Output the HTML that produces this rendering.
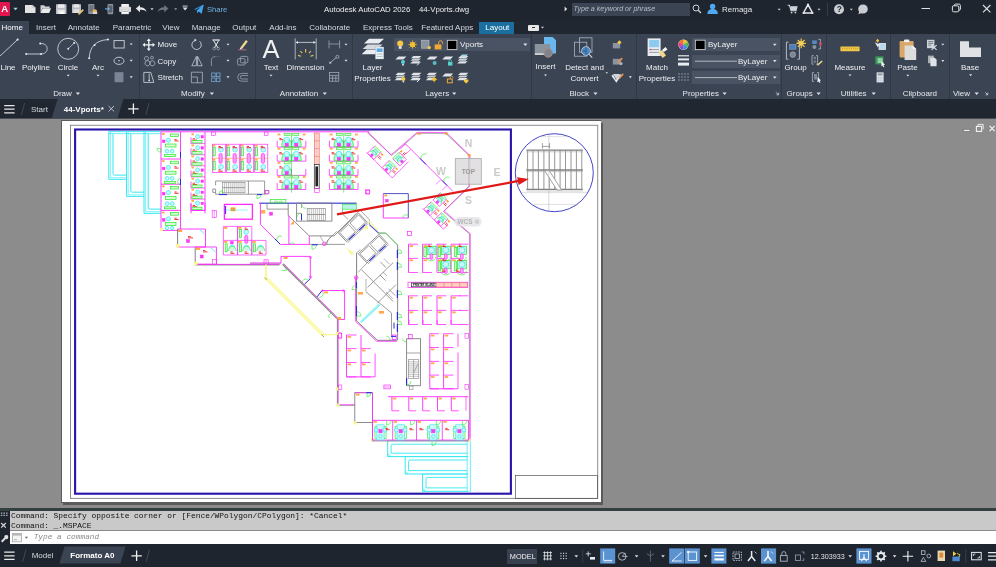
<!DOCTYPE html>
<html><head><meta charset="utf-8"><title>Autodesk AutoCAD 2026 - 44-Vports.dwg</title>
<style>
html,body{margin:0;padding:0;background:#8c8c8c;}
#app{position:relative;width:996px;height:567px;overflow:hidden;background:#8c8c8c;font-family:"Liberation Sans",sans-serif;}
#app div,#app span{position:absolute;white-space:nowrap;}
#app svg{position:absolute;left:0;top:0;will-change:transform;}
.mono{font-family:"Liberation Mono",monospace;}
</style></head><body>
<div id="app">
<div style="left:0px;top:0px;width:996px;height:21px;background:#1f252f;"></div>
<div style="left:0px;top:21px;width:996px;height:13px;background:#212731;"></div>
<div style="left:0px;top:34px;width:996px;height:65px;background:#3b4453;"></div>
<div style="left:0px;top:99px;width:996px;height:19.5px;background:#212731;"></div>
<div style="left:0px;top:117.6px;width:996px;height:1.2px;background:#4a4f57;"></div>
<div style="left:0px;top:118.8px;width:996px;height:389px;background:#8c8c8c;"></div>
<div style="left:63px;top:123px;width:540px;height:381.5px;background:#5a5a5a;"></div>
<div style="left:60.9px;top:120px;width:540.6px;height:382.6px;background:#5c5c5c;"></div>
<div style="left:62px;top:121px;width:539.3px;height:381.4px;background:#ffffff;"></div>
<div style="left:0px;top:508px;width:996px;height:37px;background:#1f252f;"></div>
<div style="left:0px;top:507.6px;width:996px;height:3.4px;background:#34403f;"></div>
<div style="left:9.5px;top:511px;width:996px;height:19.4px;background:#c9c9c9;"></div>
<div style="left:9.5px;top:530.3px;width:996px;height:0.9px;background:#8a8a8a;"></div>
<div style="left:9.5px;top:531.2px;width:996px;height:12.7px;background:#ffffff;"></div>
<div style="left:0px;top:543.9px;width:996px;height:23.1px;background:#1f252f;"></div>
<div style="left:0px;top:2px;width:10px;height:13.5px;background:#e0164f;border-radius:0 1px 1px 0;"></div>
<div style="left:572px;top:2.5px;width:117.5px;height:13.5px;background:#3b4453;"></div>
<div style="left:0px;top:21px;width:29px;height:13px;background:#3b4453;"></div>
<div style="left:478.7px;top:21.5px;width:35px;height:12.5px;background:#1a6fa0;"></div>
<div style="left:528px;top:24.5px;width:10.5px;height:6px;background:#e8e8e8;border-radius:1px;"></div>
<div style="left:531.5px;top:27px;width:3.5px;height:1px;background:#333;"></div>
<div style="left:138.5px;top:34px;width:1px;height:65px;background:#303846;"></div>
<div style="left:254.5px;top:34px;width:1px;height:65px;background:#303846;"></div>
<div style="left:352.0px;top:34px;width:1px;height:65px;background:#303846;"></div>
<div style="left:530.5px;top:34px;width:1px;height:65px;background:#303846;"></div>
<div style="left:636.0px;top:34px;width:1px;height:65px;background:#303846;"></div>
<div style="left:780.5px;top:34px;width:1px;height:65px;background:#303846;"></div>
<div style="left:825.9px;top:34px;width:1px;height:65px;background:#303846;"></div>
<div style="left:889.9px;top:34px;width:1px;height:65px;background:#303846;"></div>
<div style="left:949.0px;top:34px;width:1px;height:65px;background:#303846;"></div>
<div style="left:393.5px;top:38.2px;width:136px;height:13px;background:#4a5363;"></div>
<div style="left:692px;top:38.2px;width:88px;height:13px;background:#4a5363;"></div>
<div style="left:692px;top:54.5px;width:88px;height:13px;background:#4a5363;"></div>
<div style="left:692px;top:70.8px;width:88px;height:13px;background:#4a5363;"></div>
<div style="left:507.3px;top:548.5px;width:30px;height:15.5px;background:#38414f;"></div>
<svg width="996" height="567" viewBox="0 0 996 567">
<g id="drawing">
<rect x="70.5" y="125.3" width="527.2" height="373.1" stroke="#8c8c8c" stroke-width="1.0" fill="none" />
<rect x="515.4" y="475.4" width="82.2" height="23.0" stroke="#555" stroke-width="0.7" fill="none" />
<rect x="75.1" y="129.5" width="435.8" height="364.2" stroke="#2814aa" stroke-width="2.1" fill="none" />
<path d="M108.8 131.6 L108.8 179.3 L126.6 179.3" stroke="#30e8f0" stroke-width="1.0" fill="none" />
<path d="M110.4 131.6 L110.4 177.7 L126.6 177.7" stroke="#30e8f0" stroke-width="0.6" fill="none" />
<path d="M113.0 133.6V173.6q0 1.5 1.5 1.5H126.6" stroke="#30e8f0" stroke-width="1.0" fill="none"/>
<path d="M108.8 131.6L126.6 131.6" stroke="#30e8f0" stroke-width="0.9" fill="none" />
<path d="M108.8 133.6L126.6 133.6" stroke="#30e8f0" stroke-width="0.7" fill="none" />
<path d="M126.6 131.6 L126.6 196.4 L144.0 196.4" stroke="#30e8f0" stroke-width="1.0" fill="none" />
<path d="M128.2 131.6 L128.2 194.8 L144.0 194.8" stroke="#30e8f0" stroke-width="0.6" fill="none" />
<path d="M130.8 133.6V190.7q0 1.5 1.5 1.5H144.0" stroke="#30e8f0" stroke-width="1.0" fill="none"/>
<path d="M126.6 131.6L144.0 131.6" stroke="#30e8f0" stroke-width="0.9" fill="none" />
<path d="M126.6 133.6L144.0 133.6" stroke="#30e8f0" stroke-width="0.7" fill="none" />
<path d="M144.0 131.6 L144.0 213.3 L161.0 213.3" stroke="#30e8f0" stroke-width="1.0" fill="none" />
<path d="M145.6 131.6 L145.6 211.7 L161.0 211.7" stroke="#30e8f0" stroke-width="0.6" fill="none" />
<path d="M148.2 133.6V207.6q0 1.5 1.5 1.5H161.0" stroke="#30e8f0" stroke-width="1.0" fill="none"/>
<path d="M144.0 131.6L161.0 131.6" stroke="#30e8f0" stroke-width="0.9" fill="none" />
<path d="M144.0 133.6L161.0 133.6" stroke="#30e8f0" stroke-width="0.7" fill="none" />
<path d="M468.4 440.6 L470.4 440.6 L470.4 491.3 L468.4 491.3" stroke="#30e8f0" stroke-width="0.7" fill="none" />
<path d="M467.2 440.6L467.2 491.3" stroke="#30e8f0" stroke-width="0.7" fill="none" />
<path d="M468.0 440.8 L387.7 440.8" stroke="#30e8f0" stroke-width="0.6" fill="none" />
<path d="M387.7 440.8 L387.7 456.6 L468.0 456.6" stroke="#30e8f0" stroke-width="1.0" fill="none" />
<path d="M467.0 444.2H392.6q-1.5 0 -1.5 1.5V453.2H467.0" stroke="#30e8f0" stroke-width="0.9" fill="none"/>
<circle cx="388.9" cy="455.6" r="1.1" stroke="#30e8f0" stroke-width="0.6" fill="none"/>
<path d="M468.0 456.6 L405.2 456.6" stroke="#30e8f0" stroke-width="0.6" fill="none" />
<path d="M405.2 456.6 L405.2 474.0 L468.0 474.0" stroke="#30e8f0" stroke-width="1.0" fill="none" />
<path d="M467.0 460.0H410.1q-1.5 0 -1.5 1.5V470.6H467.0" stroke="#30e8f0" stroke-width="0.9" fill="none"/>
<circle cx="406.4" cy="473.0" r="1.1" stroke="#30e8f0" stroke-width="0.6" fill="none"/>
<path d="M468.0 474.0 L422.6 474.0" stroke="#30e8f0" stroke-width="0.6" fill="none" />
<path d="M422.6 474.0 L422.6 491.3 L468.0 491.3" stroke="#30e8f0" stroke-width="1.0" fill="none" />
<path d="M467.0 477.4H427.5q-1.5 0 -1.5 1.5V487.9H467.0" stroke="#30e8f0" stroke-width="0.9" fill="none"/>
<circle cx="423.8" cy="490.3" r="1.1" stroke="#30e8f0" stroke-width="0.6" fill="none"/>
<path d="M161.0 131.8L161.0 230.0" stroke="#ff28ff" stroke-width="0.9" fill="none" />
<path d="M180.5 131.8L180.5 229.0" stroke="#ff28ff" stroke-width="0.9" fill="none" />
<path d="M161.0 159.0L180.5 159.0" stroke="#ff28ff" stroke-width="0.9" fill="none" />
<rect x="162.0" y="133.0" width="2.6" height="1.8" fill="#ff9a28" opacity="0.85"/>
<rect x="162.4" y="140.0" width="2.6" height="2.6" fill="#f040f0" stroke="#ff28ff" stroke-width="0.5"/>
<circle cx="168.4" cy="140.2" r="2.1" stroke="#30e8f0" stroke-width="0.7" fill="#c8f8f8"/>
<rect x="165.6" y="144.0" width="10.4" height="3.0" stroke="#28e828" stroke-width="0.7" fill="#d8fcd8" />
<rect x="170.5" y="134.0" width="8.0" height="2.6" stroke="#28e828" stroke-width="0.7" fill="#d8fcd8" />
<circle cx="167.0" cy="151.2" r="1.9" stroke="#30e8f0" stroke-width="0.7" fill="#c8f8f8"/>
<circle cx="172.2" cy="151.2" r="1.9" stroke="#30e8f0" stroke-width="0.7" fill="#c8f8f8"/>
<path d="M174.4 139.6h2.3M174.4 140.9h4.2" stroke="#f02020" stroke-width="0.9" fill="none"/>
<rect x="164.6" y="154.4" width="11.0" height="2.0" stroke="#28e828" stroke-width="0.7" fill="#d8fcd8" />
<path d="M161.0 184.2L180.5 184.2" stroke="#ff28ff" stroke-width="0.9" fill="none" />
<rect x="162.0" y="160.2" width="2.6" height="1.8" fill="#ff9a28" opacity="0.85"/>
<rect x="162.4" y="167.2" width="2.6" height="2.6" fill="#f040f0" stroke="#ff28ff" stroke-width="0.5"/>
<circle cx="168.4" cy="167.4" r="2.1" stroke="#30e8f0" stroke-width="0.7" fill="#c8f8f8"/>
<rect x="165.6" y="171.2" width="10.4" height="3.0" stroke="#28e828" stroke-width="0.7" fill="#d8fcd8" />
<rect x="170.5" y="161.2" width="8.0" height="2.6" stroke="#28e828" stroke-width="0.7" fill="#d8fcd8" />
<circle cx="167.0" cy="178.4" r="1.9" stroke="#30e8f0" stroke-width="0.7" fill="#c8f8f8"/>
<circle cx="172.2" cy="178.4" r="1.9" stroke="#30e8f0" stroke-width="0.7" fill="#c8f8f8"/>
<path d="M174.4 166.8h2.3M174.4 168.1h4.2" stroke="#f02020" stroke-width="0.9" fill="none"/>
<rect x="164.6" y="181.6" width="11.0" height="2.0" stroke="#28e828" stroke-width="0.7" fill="#d8fcd8" />
<path d="M161.0 210.4L180.5 210.4" stroke="#ff28ff" stroke-width="0.9" fill="none" />
<rect x="162.0" y="185.4" width="2.6" height="1.8" fill="#ff9a28" opacity="0.85"/>
<rect x="162.4" y="192.4" width="2.6" height="2.6" fill="#f040f0" stroke="#ff28ff" stroke-width="0.5"/>
<circle cx="168.4" cy="192.6" r="2.1" stroke="#30e8f0" stroke-width="0.7" fill="#c8f8f8"/>
<rect x="165.6" y="196.4" width="10.4" height="3.0" stroke="#28e828" stroke-width="0.7" fill="#d8fcd8" />
<rect x="170.5" y="186.4" width="8.0" height="2.6" stroke="#28e828" stroke-width="0.7" fill="#d8fcd8" />
<circle cx="167.0" cy="203.6" r="1.9" stroke="#30e8f0" stroke-width="0.7" fill="#c8f8f8"/>
<circle cx="172.2" cy="203.6" r="1.9" stroke="#30e8f0" stroke-width="0.7" fill="#c8f8f8"/>
<path d="M174.4 192.0h2.3M174.4 193.3h4.2" stroke="#f02020" stroke-width="0.9" fill="none"/>
<rect x="164.6" y="206.8" width="11.0" height="2.0" stroke="#28e828" stroke-width="0.7" fill="#d8fcd8" />
<path d="M161.0 230.4L180.5 230.4" stroke="#ff28ff" stroke-width="0.9" fill="none" />
<rect x="162.0" y="211.6" width="2.6" height="1.8" fill="#ff9a28" opacity="0.85"/>
<rect x="162.4" y="218.6" width="2.6" height="2.6" fill="#f040f0" stroke="#ff28ff" stroke-width="0.5"/>
<circle cx="168.4" cy="218.8" r="2.1" stroke="#30e8f0" stroke-width="0.7" fill="#c8f8f8"/>
<rect x="165.6" y="222.6" width="10.4" height="3.0" stroke="#28e828" stroke-width="0.7" fill="#d8fcd8" />
<rect x="170.5" y="212.6" width="8.0" height="2.6" stroke="#28e828" stroke-width="0.7" fill="#d8fcd8" />
<circle cx="167.0" cy="228.0" r="1.7" stroke="#30e8f0" stroke-width="0.7" fill="#c8f8f8"/>
<circle cx="172.2" cy="228.0" r="1.7" stroke="#30e8f0" stroke-width="0.7" fill="#c8f8f8"/>
<path d="M174.4 218.2h2.3M174.4 219.5h4.2" stroke="#f02020" stroke-width="0.9" fill="none"/>
<path d="M157 148.6a3.4 3.4 0 0 0 4 3.4v-3.4z" stroke="#28e828" stroke-width="0.6" fill="none"/>
<path d="M180.5 178a3.6 3.6 0 0 0 0 7" stroke="#28e828" stroke-width="0.6" fill="none"/>
<path d="M180.5 152.0L180.5 158.0" stroke="#2828e0" stroke-width="1" fill="none" />
<path d="M180.5 179.0L180.5 185.0" stroke="#2828e0" stroke-width="1" fill="none" />
<path d="M205.0 131.8L205.0 210.5" stroke="#ff28ff" stroke-width="0.9" fill="none" />
<path d="M191.0 137.2L191.0 143.6" stroke="#ff28ff" stroke-width="0.8" fill="none" />
<path d="M191.0 143.6L205.0 143.6" stroke="#ff28ff" stroke-width="0.7" fill="none" />
<rect x="191.4" y="133.4" width="2.6" height="1.8" fill="#ff9a28" opacity="0.85"/>
<circle cx="197.6" cy="136.6" r="2.0" stroke="#30e8f0" stroke-width="0.7" fill="#c8f8f8"/>
<rect x="201.0" y="135.6" width="2.4" height="2.4" fill="#f040f0" stroke="#ff28ff" stroke-width="0.5"/>
<path d="M192.6 138.8h2.5M192.6 140.1h4.6" stroke="#f02020" stroke-width="0.9" fill="none"/>
<rect x="192.0" y="140.6" width="10.0" height="2.4" stroke="#28e828" stroke-width="0.7" fill="#d8fcd8" />
<path d="M191.0 148.3L191.0 154.7" stroke="#ff28ff" stroke-width="0.8" fill="none" />
<path d="M191.0 154.7L205.0 154.7" stroke="#ff28ff" stroke-width="0.7" fill="none" />
<rect x="191.4" y="144.5" width="2.6" height="1.8" fill="#ff9a28" opacity="0.85"/>
<circle cx="197.6" cy="147.7" r="2.0" stroke="#30e8f0" stroke-width="0.7" fill="#c8f8f8"/>
<rect x="201.0" y="146.7" width="2.4" height="2.4" fill="#f040f0" stroke="#ff28ff" stroke-width="0.5"/>
<path d="M192.6 149.9h2.5M192.6 151.2h4.6" stroke="#f02020" stroke-width="0.9" fill="none"/>
<rect x="192.0" y="151.7" width="10.0" height="2.4" stroke="#28e828" stroke-width="0.7" fill="#d8fcd8" />
<path d="M191.0 159.4L191.0 165.8" stroke="#ff28ff" stroke-width="0.8" fill="none" />
<path d="M191.0 165.8L205.0 165.8" stroke="#ff28ff" stroke-width="0.7" fill="none" />
<rect x="191.4" y="155.6" width="2.6" height="1.8" fill="#ff9a28" opacity="0.85"/>
<circle cx="197.6" cy="158.8" r="2.0" stroke="#30e8f0" stroke-width="0.7" fill="#c8f8f8"/>
<rect x="201.0" y="157.8" width="2.4" height="2.4" fill="#f040f0" stroke="#ff28ff" stroke-width="0.5"/>
<path d="M192.6 161.0h2.5M192.6 162.3h4.6" stroke="#f02020" stroke-width="0.9" fill="none"/>
<rect x="192.0" y="162.8" width="10.0" height="2.4" stroke="#28e828" stroke-width="0.7" fill="#d8fcd8" />
<path d="M191.0 170.5L191.0 176.9" stroke="#ff28ff" stroke-width="0.8" fill="none" />
<path d="M191.0 176.9L205.0 176.9" stroke="#ff28ff" stroke-width="0.7" fill="none" />
<rect x="191.4" y="166.7" width="2.6" height="1.8" fill="#ff9a28" opacity="0.85"/>
<circle cx="197.6" cy="169.9" r="2.0" stroke="#30e8f0" stroke-width="0.7" fill="#c8f8f8"/>
<rect x="201.0" y="168.9" width="2.4" height="2.4" fill="#f040f0" stroke="#ff28ff" stroke-width="0.5"/>
<path d="M192.6 172.1h2.5M192.6 173.4h4.6" stroke="#f02020" stroke-width="0.9" fill="none"/>
<rect x="192.0" y="173.9" width="10.0" height="2.4" stroke="#28e828" stroke-width="0.7" fill="#d8fcd8" />
<path d="M191.0 181.6L191.0 188.0" stroke="#ff28ff" stroke-width="0.8" fill="none" />
<path d="M191.0 188.0L205.0 188.0" stroke="#ff28ff" stroke-width="0.7" fill="none" />
<rect x="191.4" y="177.8" width="2.6" height="1.8" fill="#ff9a28" opacity="0.85"/>
<circle cx="197.6" cy="181.0" r="2.0" stroke="#30e8f0" stroke-width="0.7" fill="#c8f8f8"/>
<rect x="201.0" y="180.0" width="2.4" height="2.4" fill="#f040f0" stroke="#ff28ff" stroke-width="0.5"/>
<path d="M192.6 183.2h2.5M192.6 184.5h4.6" stroke="#f02020" stroke-width="0.9" fill="none"/>
<rect x="192.0" y="185.0" width="10.0" height="2.4" stroke="#28e828" stroke-width="0.7" fill="#d8fcd8" />
<path d="M191.0 192.7L191.0 199.1" stroke="#ff28ff" stroke-width="0.8" fill="none" />
<path d="M191.0 199.1L205.0 199.1" stroke="#ff28ff" stroke-width="0.7" fill="none" />
<rect x="191.4" y="188.9" width="2.6" height="1.8" fill="#ff9a28" opacity="0.85"/>
<circle cx="197.6" cy="192.1" r="2.0" stroke="#30e8f0" stroke-width="0.7" fill="#c8f8f8"/>
<rect x="201.0" y="191.1" width="2.4" height="2.4" fill="#f040f0" stroke="#ff28ff" stroke-width="0.5"/>
<path d="M192.6 194.3h2.5M192.6 195.6h4.6" stroke="#f02020" stroke-width="0.9" fill="none"/>
<rect x="192.0" y="196.1" width="10.0" height="2.4" stroke="#28e828" stroke-width="0.7" fill="#d8fcd8" />
<path d="M191.0 203.8L191.0 210.2" stroke="#ff28ff" stroke-width="0.8" fill="none" />
<path d="M191.0 210.2L205.0 210.2" stroke="#ff28ff" stroke-width="0.7" fill="none" />
<rect x="191.4" y="200.0" width="2.6" height="1.8" fill="#ff9a28" opacity="0.85"/>
<circle cx="197.6" cy="203.2" r="2.0" stroke="#30e8f0" stroke-width="0.7" fill="#c8f8f8"/>
<rect x="201.0" y="202.2" width="2.4" height="2.4" fill="#f040f0" stroke="#ff28ff" stroke-width="0.5"/>
<path d="M192.6 205.4h2.5M192.6 206.7h4.6" stroke="#f02020" stroke-width="0.9" fill="none"/>
<rect x="192.0" y="207.2" width="10.0" height="2.4" stroke="#28e828" stroke-width="0.7" fill="#d8fcd8" />
<path d="M191.0 210.5L205.0 210.5" stroke="#ff28ff" stroke-width="0.9" fill="none" />
<path d="M191.0 203.0L191.0 213.4" stroke="#ff28ff" stroke-width="0.9" fill="none" />
<path d="M205.0 203.0L205.0 213.4" stroke="#ff28ff" stroke-width="0.9" fill="none" />
<path d="M161.0 131.8L369.5 131.8" stroke="#ff28ff" stroke-width="0.9" fill="none" />
<rect x="211.6" y="132.0" width="4.0" height="3.6" stroke="#ff28ff" stroke-width="0.6" fill="none" />
<rect x="264.4" y="132.0" width="3.6" height="3.6" stroke="#ff28ff" stroke-width="0.6" fill="none" />
<rect x="212.2" y="210.5" width="4.2" height="7.0" stroke="#ff28ff" stroke-width="0.6" fill="none" />
<path d="M214.3 210.5L214.3 217.5" stroke="#ff28ff" stroke-width="0.5" fill="none" />
<rect x="212.4" y="144.2" width="13.1" height="28.3" stroke="#ff28ff" stroke-width="0.7" fill="none" />
<path d="M212.4 158.3L225.5 158.3" stroke="#ff9a28" stroke-width="0.6" fill="none" />
<rect x="212.8" y="144.6" width="2.6" height="1.8" fill="#ff9a28" opacity="0.85"/>
<rect x="212.8" y="158.8" width="2.6" height="1.8" fill="#ff9a28" opacity="0.85"/>
<rect x="213.2" y="147.2" width="2.0" height="8.6" stroke="#28e828" stroke-width="0.7" fill="#d8fcd8" />
<rect x="213.2" y="161.3" width="2.0" height="8.6" stroke="#28e828" stroke-width="0.7" fill="#d8fcd8" />
<circle cx="221.0" cy="149.6" r="2.4" stroke="#30e8f0" stroke-width="0.7" fill="#c8f8f8"/>
<circle cx="221.0" cy="166.9" r="2.4" stroke="#30e8f0" stroke-width="0.7" fill="#c8f8f8"/>
<rect x="219.0" y="153.6" width="3.2" height="9.6" rx="1.4" fill="#f8a0f8" stroke="#ff28ff" stroke-width="0.7"/>
<path d="M218.4 146.4h2.4M218.4 147.7h4.4" stroke="#f02020" stroke-width="0.9" fill="none"/>
<path d="M218.4 169.9h2.4M218.4 171.2h4.4" stroke="#f02020" stroke-width="0.9" fill="none"/>
<rect x="226.5" y="144.2" width="13.1" height="28.3" stroke="#ff28ff" stroke-width="0.7" fill="none" />
<path d="M226.5 158.3L239.6 158.3" stroke="#ff9a28" stroke-width="0.6" fill="none" />
<rect x="226.9" y="144.6" width="2.6" height="1.8" fill="#ff9a28" opacity="0.85"/>
<rect x="226.9" y="158.8" width="2.6" height="1.8" fill="#ff9a28" opacity="0.85"/>
<rect x="227.3" y="147.2" width="2.0" height="8.6" stroke="#28e828" stroke-width="0.7" fill="#d8fcd8" />
<rect x="227.3" y="161.3" width="2.0" height="8.6" stroke="#28e828" stroke-width="0.7" fill="#d8fcd8" />
<circle cx="235.1" cy="149.6" r="2.4" stroke="#30e8f0" stroke-width="0.7" fill="#c8f8f8"/>
<circle cx="235.1" cy="166.9" r="2.4" stroke="#30e8f0" stroke-width="0.7" fill="#c8f8f8"/>
<rect x="233.1" y="153.6" width="3.2" height="9.6" rx="1.4" fill="#f8a0f8" stroke="#ff28ff" stroke-width="0.7"/>
<path d="M232.5 146.4h2.4M232.5 147.7h4.4" stroke="#f02020" stroke-width="0.9" fill="none"/>
<path d="M232.5 169.9h2.4M232.5 171.2h4.4" stroke="#f02020" stroke-width="0.9" fill="none"/>
<rect x="240.6" y="144.2" width="13.1" height="28.3" stroke="#ff28ff" stroke-width="0.7" fill="none" />
<path d="M240.6 158.3L253.7 158.3" stroke="#ff9a28" stroke-width="0.6" fill="none" />
<rect x="241.0" y="144.6" width="2.6" height="1.8" fill="#ff9a28" opacity="0.85"/>
<rect x="241.0" y="158.8" width="2.6" height="1.8" fill="#ff9a28" opacity="0.85"/>
<rect x="241.4" y="147.2" width="2.0" height="8.6" stroke="#28e828" stroke-width="0.7" fill="#d8fcd8" />
<rect x="241.4" y="161.3" width="2.0" height="8.6" stroke="#28e828" stroke-width="0.7" fill="#d8fcd8" />
<circle cx="249.2" cy="149.6" r="2.4" stroke="#30e8f0" stroke-width="0.7" fill="#c8f8f8"/>
<circle cx="249.2" cy="166.9" r="2.4" stroke="#30e8f0" stroke-width="0.7" fill="#c8f8f8"/>
<rect x="247.2" y="153.6" width="3.2" height="9.6" rx="1.4" fill="#f8a0f8" stroke="#ff28ff" stroke-width="0.7"/>
<path d="M246.6 146.4h2.4M246.6 147.7h4.4" stroke="#f02020" stroke-width="0.9" fill="none"/>
<path d="M246.6 169.9h2.4M246.6 171.2h4.4" stroke="#f02020" stroke-width="0.9" fill="none"/>
<rect x="254.7" y="144.2" width="13.1" height="28.3" stroke="#ff28ff" stroke-width="0.7" fill="none" />
<path d="M254.7 158.3L267.8 158.3" stroke="#ff9a28" stroke-width="0.6" fill="none" />
<rect x="255.1" y="144.6" width="2.6" height="1.8" fill="#ff9a28" opacity="0.85"/>
<rect x="255.1" y="158.8" width="2.6" height="1.8" fill="#ff9a28" opacity="0.85"/>
<rect x="255.5" y="147.2" width="2.0" height="8.6" stroke="#28e828" stroke-width="0.7" fill="#d8fcd8" />
<rect x="255.5" y="161.3" width="2.0" height="8.6" stroke="#28e828" stroke-width="0.7" fill="#d8fcd8" />
<circle cx="263.3" cy="149.6" r="2.4" stroke="#30e8f0" stroke-width="0.7" fill="#c8f8f8"/>
<circle cx="263.3" cy="166.9" r="2.4" stroke="#30e8f0" stroke-width="0.7" fill="#c8f8f8"/>
<rect x="261.3" y="153.6" width="3.2" height="9.6" rx="1.4" fill="#f8a0f8" stroke="#ff28ff" stroke-width="0.7"/>
<path d="M260.7 146.4h2.4M260.7 147.7h4.4" stroke="#f02020" stroke-width="0.9" fill="none"/>
<path d="M260.7 169.9h2.4M260.7 171.2h4.4" stroke="#f02020" stroke-width="0.9" fill="none"/>
<path d="M215.6 181.0 L264.6 181.0 L264.6 194.2 L215.6 194.2 L215.6 189.0 L212.8 189.0 L212.8 192.4 L215.6 192.4" stroke="#808080" stroke-width="0.8" fill="none" />
<path d="M215.6 181.0 L215.6 185.4" stroke="#808080" stroke-width="0.8" fill="none" />
<path d="M248.4 181.0L248.4 194.2" stroke="#808080" stroke-width="0.8" fill="none" />
<path d="M224.6 182.4L224.6 192.8" stroke="#808080" stroke-width="0.5" fill="none" />
<path d="M226.7 182.4L226.7 192.8" stroke="#808080" stroke-width="0.5" fill="none" />
<path d="M228.7 182.4L228.7 192.8" stroke="#808080" stroke-width="0.5" fill="none" />
<path d="M230.8 182.4L230.8 192.8" stroke="#808080" stroke-width="0.5" fill="none" />
<path d="M232.8 182.4L232.8 192.8" stroke="#808080" stroke-width="0.5" fill="none" />
<path d="M234.8 182.4L234.8 192.8" stroke="#808080" stroke-width="0.5" fill="none" />
<path d="M236.9 182.4L236.9 192.8" stroke="#808080" stroke-width="0.5" fill="none" />
<path d="M238.9 182.4L238.9 192.8" stroke="#808080" stroke-width="0.5" fill="none" />
<path d="M241.0 182.4L241.0 192.8" stroke="#808080" stroke-width="0.5" fill="none" />
<path d="M243.0 182.4L243.0 192.8" stroke="#808080" stroke-width="0.5" fill="none" />
<path d="M222.6 187.6L245.0 187.6" stroke="#808080" stroke-width="0.7" fill="none" />
<rect x="222.6" y="182.4" width="22.4" height="10.4" stroke="#808080" stroke-width="0.6" fill="none" />
<rect x="264.6" y="190.4" width="3.6" height="3.6" stroke="#808080" stroke-width="0.6" fill="none" />
<path d="M219 194.2a3.6 3.6 0 0 1 3.6-3.6v3.6" stroke="#28e828" stroke-width="0.6" fill="none"/>
<path d="M257 194.6v4a4 4 0 0 0 4-4" stroke="#28e828" stroke-width="0.6" fill="none"/>
<path d="M219.0 194.6L227.0 194.6" stroke="#2828e0" stroke-width="1" fill="none" />
<path d="M257.0 194.6L262.0 194.6" stroke="#2828e0" stroke-width="1" fill="none" />
<path d="M277.2 140.7 L277.2 147.1 L291.5 147.1 L291.5 140.7" stroke="#ff28ff" stroke-width="0.8" fill="none" />
<rect x="277.6" y="133.6" width="2.8" height="1.8" fill="#ff9a28" opacity="0.85"/>
<rect x="284.1" y="133.4" width="6.0" height="2.2" stroke="#28e828" stroke-width="0.6" fill="#e0fce0" />
<path d="M279.4 138.4h2.2M279.4 139.7h4.0" stroke="#f02020" stroke-width="0.9" fill="none"/>
<path d="M281.9 146.5v-2.4a4.8 5.6 0 0 1 9.6 0v2.4z" stroke="#28e828" stroke-width="0.7" fill="#b4f6e6"/>
<circle cx="286.7" cy="139.9" r="2.8" stroke="#30e8f0" stroke-width="0.7" fill="#c8f8f8"/>
<rect x="285.1" y="143.3" width="3.2" height="3.2" fill="#f040f0" stroke="#ff28ff" stroke-width="0.5"/>
<path d="M291.5 140.7 L291.5 147.1 L305.8 147.1 L305.8 140.7" stroke="#ff28ff" stroke-width="0.8" fill="none" />
<rect x="302.8" y="133.6" width="2.8" height="1.8" fill="#ff9a28" opacity="0.85"/>
<rect x="292.7" y="133.4" width="6.0" height="2.2" stroke="#28e828" stroke-width="0.6" fill="#e0fce0" />
<path d="M299.2 138.4h2.2M299.2 139.7h4.0" stroke="#f02020" stroke-width="0.9" fill="none"/>
<path d="M291.5 146.5v-2.4a4.8 5.6 0 0 1 9.6 0v2.4z" stroke="#28e828" stroke-width="0.7" fill="#b4f6e6"/>
<circle cx="296.3" cy="139.9" r="2.8" stroke="#30e8f0" stroke-width="0.7" fill="#c8f8f8"/>
<rect x="294.7" y="143.3" width="3.2" height="3.2" fill="#f040f0" stroke="#ff28ff" stroke-width="0.5"/>
<path d="M277.2 154.8 L277.2 161.2 L291.5 161.2 L291.5 154.8" stroke="#ff28ff" stroke-width="0.8" fill="none" />
<rect x="277.6" y="147.8" width="2.8" height="1.8" fill="#ff9a28" opacity="0.85"/>
<rect x="284.1" y="147.6" width="6.0" height="2.2" stroke="#28e828" stroke-width="0.6" fill="#e0fce0" />
<path d="M279.4 152.6h2.2M279.4 153.9h4.0" stroke="#f02020" stroke-width="0.9" fill="none"/>
<path d="M281.9 160.7v-2.4a4.8 5.6 0 0 1 9.6 0v2.4z" stroke="#28e828" stroke-width="0.7" fill="#b4f6e6"/>
<circle cx="286.7" cy="154.1" r="2.8" stroke="#30e8f0" stroke-width="0.7" fill="#c8f8f8"/>
<rect x="285.1" y="157.4" width="3.2" height="3.2" fill="#f040f0" stroke="#ff28ff" stroke-width="0.5"/>
<path d="M291.5 154.8 L291.5 161.2 L305.8 161.2 L305.8 154.8" stroke="#ff28ff" stroke-width="0.8" fill="none" />
<rect x="302.8" y="147.8" width="2.8" height="1.8" fill="#ff9a28" opacity="0.85"/>
<rect x="292.7" y="147.6" width="6.0" height="2.2" stroke="#28e828" stroke-width="0.6" fill="#e0fce0" />
<path d="M299.2 152.6h2.2M299.2 153.9h4.0" stroke="#f02020" stroke-width="0.9" fill="none"/>
<path d="M291.5 160.7v-2.4a4.8 5.6 0 0 1 9.6 0v2.4z" stroke="#28e828" stroke-width="0.7" fill="#b4f6e6"/>
<circle cx="296.3" cy="154.1" r="2.8" stroke="#30e8f0" stroke-width="0.7" fill="#c8f8f8"/>
<rect x="294.7" y="157.4" width="3.2" height="3.2" fill="#f040f0" stroke="#ff28ff" stroke-width="0.5"/>
<path d="M277.2 169.0 L277.2 175.4 L291.5 175.4 L291.5 169.0" stroke="#ff28ff" stroke-width="0.8" fill="none" />
<rect x="277.6" y="161.9" width="2.8" height="1.8" fill="#ff9a28" opacity="0.85"/>
<rect x="284.1" y="161.7" width="6.0" height="2.2" stroke="#28e828" stroke-width="0.6" fill="#e0fce0" />
<path d="M279.4 166.7h2.2M279.4 168.0h4.0" stroke="#f02020" stroke-width="0.9" fill="none"/>
<path d="M281.9 174.8v-2.4a4.8 5.6 0 0 1 9.6 0v2.4z" stroke="#28e828" stroke-width="0.7" fill="#b4f6e6"/>
<circle cx="286.7" cy="168.2" r="2.8" stroke="#30e8f0" stroke-width="0.7" fill="#c8f8f8"/>
<rect x="285.1" y="171.6" width="3.2" height="3.2" fill="#f040f0" stroke="#ff28ff" stroke-width="0.5"/>
<path d="M291.5 169.0 L291.5 175.4 L305.8 175.4 L305.8 169.0" stroke="#ff28ff" stroke-width="0.8" fill="none" />
<path d="M277.2 183.1 L277.2 189.5 L291.5 189.5 L291.5 183.1" stroke="#ff28ff" stroke-width="0.8" fill="none" />
<rect x="277.6" y="176.0" width="2.8" height="1.8" fill="#ff9a28" opacity="0.85"/>
<rect x="284.1" y="175.8" width="6.0" height="2.2" stroke="#28e828" stroke-width="0.6" fill="#e0fce0" />
<path d="M279.4 180.8h2.2M279.4 182.2h4.0" stroke="#f02020" stroke-width="0.9" fill="none"/>
<path d="M281.9 188.9v-2.4a4.8 5.6 0 0 1 9.6 0v2.4z" stroke="#28e828" stroke-width="0.7" fill="#b4f6e6"/>
<circle cx="286.7" cy="182.3" r="2.8" stroke="#30e8f0" stroke-width="0.7" fill="#c8f8f8"/>
<rect x="285.1" y="185.7" width="3.2" height="3.2" fill="#f040f0" stroke="#ff28ff" stroke-width="0.5"/>
<path d="M291.5 183.1 L291.5 189.5 L305.8 189.5 L305.8 183.1" stroke="#ff28ff" stroke-width="0.8" fill="none" />
<rect x="302.8" y="176.0" width="2.8" height="1.8" fill="#ff9a28" opacity="0.85"/>
<rect x="292.7" y="175.8" width="6.0" height="2.2" stroke="#28e828" stroke-width="0.6" fill="#e0fce0" />
<path d="M299.2 180.8h2.2M299.2 182.2h4.0" stroke="#f02020" stroke-width="0.9" fill="none"/>
<path d="M291.5 188.9v-2.4a4.8 5.6 0 0 1 9.6 0v2.4z" stroke="#28e828" stroke-width="0.7" fill="#b4f6e6"/>
<circle cx="296.3" cy="182.3" r="2.8" stroke="#30e8f0" stroke-width="0.7" fill="#c8f8f8"/>
<rect x="294.7" y="185.7" width="3.2" height="3.2" fill="#f040f0" stroke="#ff28ff" stroke-width="0.5"/>
<path d="M291.5 133.0L291.5 192.6" stroke="#28e828" stroke-width="0.6" fill="none" />
<path d="M329.4 140.7 L329.4 147.1 L343.7 147.1 L343.7 140.7" stroke="#ff28ff" stroke-width="0.8" fill="none" />
<rect x="329.8" y="133.6" width="2.8" height="1.8" fill="#ff9a28" opacity="0.85"/>
<rect x="336.3" y="133.4" width="6.0" height="2.2" stroke="#28e828" stroke-width="0.6" fill="#e0fce0" />
<path d="M331.6 138.4h2.2M331.6 139.7h4.0" stroke="#f02020" stroke-width="0.9" fill="none"/>
<path d="M334.1 146.5v-2.4a4.8 5.6 0 0 1 9.6 0v2.4z" stroke="#28e828" stroke-width="0.7" fill="#b4f6e6"/>
<circle cx="338.9" cy="139.9" r="2.8" stroke="#30e8f0" stroke-width="0.7" fill="#c8f8f8"/>
<rect x="337.3" y="143.3" width="3.2" height="3.2" fill="#f040f0" stroke="#ff28ff" stroke-width="0.5"/>
<path d="M343.7 140.7 L343.7 147.1 L358.0 147.1 L358.0 140.7" stroke="#ff28ff" stroke-width="0.8" fill="none" />
<rect x="355.0" y="133.6" width="2.8" height="1.8" fill="#ff9a28" opacity="0.85"/>
<rect x="344.9" y="133.4" width="6.0" height="2.2" stroke="#28e828" stroke-width="0.6" fill="#e0fce0" />
<path d="M351.4 138.4h2.2M351.4 139.7h4.0" stroke="#f02020" stroke-width="0.9" fill="none"/>
<path d="M343.7 146.5v-2.4a4.8 5.6 0 0 1 9.6 0v2.4z" stroke="#28e828" stroke-width="0.7" fill="#b4f6e6"/>
<circle cx="348.5" cy="139.9" r="2.8" stroke="#30e8f0" stroke-width="0.7" fill="#c8f8f8"/>
<rect x="346.9" y="143.3" width="3.2" height="3.2" fill="#f040f0" stroke="#ff28ff" stroke-width="0.5"/>
<path d="M329.4 154.8 L329.4 161.2 L343.7 161.2 L343.7 154.8" stroke="#ff28ff" stroke-width="0.8" fill="none" />
<rect x="329.8" y="147.8" width="2.8" height="1.8" fill="#ff9a28" opacity="0.85"/>
<rect x="336.3" y="147.6" width="6.0" height="2.2" stroke="#28e828" stroke-width="0.6" fill="#e0fce0" />
<path d="M331.6 152.6h2.2M331.6 153.9h4.0" stroke="#f02020" stroke-width="0.9" fill="none"/>
<path d="M334.1 160.7v-2.4a4.8 5.6 0 0 1 9.6 0v2.4z" stroke="#28e828" stroke-width="0.7" fill="#b4f6e6"/>
<circle cx="338.9" cy="154.1" r="2.8" stroke="#30e8f0" stroke-width="0.7" fill="#c8f8f8"/>
<rect x="337.3" y="157.4" width="3.2" height="3.2" fill="#f040f0" stroke="#ff28ff" stroke-width="0.5"/>
<path d="M343.7 154.8 L343.7 161.2 L358.0 161.2 L358.0 154.8" stroke="#ff28ff" stroke-width="0.8" fill="none" />
<rect x="355.0" y="147.8" width="2.8" height="1.8" fill="#ff9a28" opacity="0.85"/>
<rect x="344.9" y="147.6" width="6.0" height="2.2" stroke="#28e828" stroke-width="0.6" fill="#e0fce0" />
<path d="M351.4 152.6h2.2M351.4 153.9h4.0" stroke="#f02020" stroke-width="0.9" fill="none"/>
<path d="M343.7 160.7v-2.4a4.8 5.6 0 0 1 9.6 0v2.4z" stroke="#28e828" stroke-width="0.7" fill="#b4f6e6"/>
<circle cx="348.5" cy="154.1" r="2.8" stroke="#30e8f0" stroke-width="0.7" fill="#c8f8f8"/>
<rect x="346.9" y="157.4" width="3.2" height="3.2" fill="#f040f0" stroke="#ff28ff" stroke-width="0.5"/>
<path d="M329.4 169.0 L329.4 175.4 L343.7 175.4 L343.7 169.0" stroke="#ff28ff" stroke-width="0.8" fill="none" />
<rect x="329.8" y="161.9" width="2.8" height="1.8" fill="#ff9a28" opacity="0.85"/>
<rect x="336.3" y="161.7" width="6.0" height="2.2" stroke="#28e828" stroke-width="0.6" fill="#e0fce0" />
<path d="M331.6 166.7h2.2M331.6 168.0h4.0" stroke="#f02020" stroke-width="0.9" fill="none"/>
<path d="M334.1 174.8v-2.4a4.8 5.6 0 0 1 9.6 0v2.4z" stroke="#28e828" stroke-width="0.7" fill="#b4f6e6"/>
<circle cx="338.9" cy="168.2" r="2.8" stroke="#30e8f0" stroke-width="0.7" fill="#c8f8f8"/>
<rect x="337.3" y="171.6" width="3.2" height="3.2" fill="#f040f0" stroke="#ff28ff" stroke-width="0.5"/>
<path d="M343.7 169.0 L343.7 175.4 L358.0 175.4 L358.0 169.0" stroke="#ff28ff" stroke-width="0.8" fill="none" />
<rect x="355.0" y="161.9" width="2.8" height="1.8" fill="#ff9a28" opacity="0.85"/>
<rect x="344.9" y="161.7" width="6.0" height="2.2" stroke="#28e828" stroke-width="0.6" fill="#e0fce0" />
<path d="M351.4 166.7h2.2M351.4 168.0h4.0" stroke="#f02020" stroke-width="0.9" fill="none"/>
<path d="M343.7 174.8v-2.4a4.8 5.6 0 0 1 9.6 0v2.4z" stroke="#28e828" stroke-width="0.7" fill="#b4f6e6"/>
<circle cx="348.5" cy="168.2" r="2.8" stroke="#30e8f0" stroke-width="0.7" fill="#c8f8f8"/>
<rect x="346.9" y="171.6" width="3.2" height="3.2" fill="#f040f0" stroke="#ff28ff" stroke-width="0.5"/>
<path d="M329.4 183.1 L329.4 189.5 L343.7 189.5 L343.7 183.1" stroke="#ff28ff" stroke-width="0.8" fill="none" />
<rect x="329.8" y="176.0" width="2.8" height="1.8" fill="#ff9a28" opacity="0.85"/>
<rect x="336.3" y="175.8" width="6.0" height="2.2" stroke="#28e828" stroke-width="0.6" fill="#e0fce0" />
<path d="M331.6 180.8h2.2M331.6 182.2h4.0" stroke="#f02020" stroke-width="0.9" fill="none"/>
<path d="M334.1 188.9v-2.4a4.8 5.6 0 0 1 9.6 0v2.4z" stroke="#28e828" stroke-width="0.7" fill="#b4f6e6"/>
<circle cx="338.9" cy="182.3" r="2.8" stroke="#30e8f0" stroke-width="0.7" fill="#c8f8f8"/>
<rect x="337.3" y="185.7" width="3.2" height="3.2" fill="#f040f0" stroke="#ff28ff" stroke-width="0.5"/>
<path d="M343.7 183.1 L343.7 189.5 L358.0 189.5 L358.0 183.1" stroke="#ff28ff" stroke-width="0.8" fill="none" />
<rect x="355.0" y="176.0" width="2.8" height="1.8" fill="#ff9a28" opacity="0.85"/>
<rect x="344.9" y="175.8" width="6.0" height="2.2" stroke="#28e828" stroke-width="0.6" fill="#e0fce0" />
<path d="M351.4 180.8h2.2M351.4 182.2h4.0" stroke="#f02020" stroke-width="0.9" fill="none"/>
<path d="M343.7 188.9v-2.4a4.8 5.6 0 0 1 9.6 0v2.4z" stroke="#28e828" stroke-width="0.7" fill="#b4f6e6"/>
<circle cx="348.5" cy="182.3" r="2.8" stroke="#30e8f0" stroke-width="0.7" fill="#c8f8f8"/>
<rect x="346.9" y="185.7" width="3.2" height="3.2" fill="#f040f0" stroke="#ff28ff" stroke-width="0.5"/>
<path d="M343.7 133.0L343.7 192.6" stroke="#28e828" stroke-width="0.6" fill="none" />
<rect x="314.3" y="133.0" width="4.9" height="31.4" stroke="#f06060" stroke-width="0.6" fill="#fcd8d0" />
<path d="M314.3 140.8L319.2 140.8" stroke="#f06060" stroke-width="0.5" fill="none" />
<path d="M314.3 148.6L319.2 148.6" stroke="#f06060" stroke-width="0.5" fill="none" />
<path d="M314.3 156.4L319.2 156.4" stroke="#f06060" stroke-width="0.5" fill="none" />
<path d="M316.7 133.0L316.7 164.4" stroke="#f8a090" stroke-width="0.4" fill="none" />
<rect x="314.3" y="164.4" width="4.9" height="24.2" stroke="#222" stroke-width="0.7" fill="#fff" />
<rect x="315.4" y="166.4" width="2.7" height="20" fill="#222"/>
<rect x="314.3" y="188.6" width="4.9" height="4.0" stroke="#ff28ff" stroke-width="0.6" fill="none" />
<rect x="265.6" y="190.4" width="3.4" height="3.4" stroke="#ff28ff" stroke-width="0.6" fill="none" />
<rect x="366.2" y="190.4" width="3.6" height="3.6" stroke="#ff28ff" stroke-width="0.6" fill="none" />
<path d="M367.4 132.7 L391.7 155.5 L417.1 133.3 L445.7 133.3 L469.0 155.5 L469.0 186.0 L443.6 211.6 L469.4 233.8 L469.4 440.4" stroke="#808080" stroke-width="0.7" fill="none" />
<path d="M368.0 132.0 L391.1 154.8 L417.1 132.4 L446.3 132.6 L469.9 155.5 L469.6 186.6 L444.2 210.9 L470.3 233.8 L470.3 440.4" stroke="#ff28ff" stroke-width="0.7" fill="none" />
<rect x="417.6" y="132.6" width="3" height="2.2" fill="#ff9a28" opacity="0.85"/>
<rect x="445.0" y="132.6" width="3" height="2.2" fill="#ff9a28" opacity="0.85"/>
<rect x="467.6" y="154.0" width="3" height="2.4" fill="#ff9a28" opacity="0.85"/>
<path d="M405.5 143.9L453.1 191.5" stroke="#ff28ff" stroke-width="0.8" fill="none" />
<path d="M405.5 143.9L400.5 148.9" stroke="#ff28ff" stroke-width="0.7" fill="none" />
<path d="M410.8 149.2L405.8 154.2" stroke="#ff28ff" stroke-width="0.6" fill="none" />
<path d="M441.0 179.4L436.0 184.4" stroke="#ff28ff" stroke-width="0.6" fill="none" />
<path d="M447.0 185.4L442.0 190.4" stroke="#ff28ff" stroke-width="0.6" fill="none" />
<path d="M420.0 158.4L426.0 164.4" stroke="#2828e0" stroke-width="1" fill="none" />
<path d="M442.0 180.4L447.0 185.4" stroke="#2828e0" stroke-width="1" fill="none" />
<path d="M421 158.8a4 4 0 0 1 5.6 -4.6" stroke="#28e828" stroke-width="0.6" fill="none"/>
<path d="M444 182a4 4 0 0 1 5.6 -4.6" stroke="#28e828" stroke-width="0.6" fill="none"/>
<g transform="translate(374.4,152.6) rotate(45)"><path d="M-4.5 -5.25V5.25H4.5V-5.25" stroke="#ff28ff" stroke-width="0.7" fill="none"/><rect x="-3.7" y="-5.25" width="7.4" height="2" fill="#e0fce0" stroke="#28e828" stroke-width="0.5"/><circle cx="0" cy="-0.6" r="2.5" fill="#c0f8f0" stroke="#30e8f0" stroke-width="0.7"/><path d="M-3.6 2.4a3.6 3.6 0 0 1 7.2 0" stroke="#28e828" stroke-width="0.6" fill="none"/><rect x="-1.4" y="2.2" width="2.8" height="2.8" fill="#f040f0"/><path d="M5.3 -1h3M5.3 0.4h4" stroke="#f02020" stroke-width="0.8"/><rect x="5.5" y="-4.85" width="2.4" height="1.6" fill="#ff9a28"/></g>
<g transform="translate(389.0,167.0) rotate(45)"><path d="M-4.5 -5.25V5.25H4.5V-5.25" stroke="#ff28ff" stroke-width="0.7" fill="none"/><rect x="-3.7" y="-5.25" width="7.4" height="2" fill="#e0fce0" stroke="#28e828" stroke-width="0.5"/><circle cx="0" cy="-0.6" r="2.5" fill="#c0f8f0" stroke="#30e8f0" stroke-width="0.7"/><path d="M-3.6 2.4a3.6 3.6 0 0 1 7.2 0" stroke="#28e828" stroke-width="0.6" fill="none"/><rect x="-1.4" y="2.2" width="2.8" height="2.8" fill="#f040f0"/><path d="M5.3 -1h3M5.3 0.4h4" stroke="#f02020" stroke-width="0.8"/><rect x="5.5" y="-4.85" width="2.4" height="1.6" fill="#ff9a28"/></g>
<g transform="translate(399.4,159.0) rotate(-45)"><path d="M-4.5 -5.25V5.25H4.5V-5.25" stroke="#ff28ff" stroke-width="0.7" fill="none"/><rect x="-3.7" y="-5.25" width="7.4" height="2" fill="#e0fce0" stroke="#28e828" stroke-width="0.5"/><circle cx="0" cy="-0.6" r="2.5" fill="#c0f8f0" stroke="#30e8f0" stroke-width="0.7"/><path d="M-3.6 2.4a3.6 3.6 0 0 1 7.2 0" stroke="#28e828" stroke-width="0.6" fill="none"/><rect x="-1.4" y="2.2" width="2.8" height="2.8" fill="#f040f0"/><path d="M5.3 -1h3M5.3 0.4h4" stroke="#f02020" stroke-width="0.8"/><rect x="5.5" y="-4.85" width="2.4" height="1.6" fill="#ff9a28"/></g>
<path d="M366.6 152.4 L392.2 178.0 L408.6 161.6" stroke="#ff28ff" stroke-width="0.7" fill="none" />
<g transform="translate(430.6,208.6) rotate(45)"><path d="M-4.5 -5.25V5.25H4.5V-5.25" stroke="#ff28ff" stroke-width="0.7" fill="none"/><rect x="-3.7" y="-5.25" width="7.4" height="2" fill="#e0fce0" stroke="#28e828" stroke-width="0.5"/><circle cx="0" cy="-0.6" r="2.5" fill="#c0f8f0" stroke="#30e8f0" stroke-width="0.7"/><path d="M-3.6 2.4a3.6 3.6 0 0 1 7.2 0" stroke="#28e828" stroke-width="0.6" fill="none"/><rect x="-1.4" y="2.2" width="2.8" height="2.8" fill="#f040f0"/><path d="M5.3 -1h3M5.3 0.4h4" stroke="#f02020" stroke-width="0.8"/><rect x="5.5" y="-4.85" width="2.4" height="1.6" fill="#ff9a28"/></g>
<g transform="translate(440.0,199.4) rotate(45)"><path d="M-4.5 -5.25V5.25H4.5V-5.25" stroke="#ff28ff" stroke-width="0.7" fill="none"/><rect x="-3.7" y="-5.25" width="7.4" height="2" fill="#e0fce0" stroke="#28e828" stroke-width="0.5"/><circle cx="0" cy="-0.6" r="2.5" fill="#c0f8f0" stroke="#30e8f0" stroke-width="0.7"/><path d="M-3.6 2.4a3.6 3.6 0 0 1 7.2 0" stroke="#28e828" stroke-width="0.6" fill="none"/><rect x="-1.4" y="2.2" width="2.8" height="2.8" fill="#f040f0"/><path d="M5.3 -1h3M5.3 0.4h4" stroke="#f02020" stroke-width="0.8"/><rect x="5.5" y="-4.85" width="2.4" height="1.6" fill="#ff9a28"/></g>
<g transform="translate(441.2,219.4) rotate(45)"><path d="M-4.5 -5.25V5.25H4.5V-5.25" stroke="#ff28ff" stroke-width="0.7" fill="none"/><rect x="-3.7" y="-5.25" width="7.4" height="2" fill="#e0fce0" stroke="#28e828" stroke-width="0.5"/><circle cx="0" cy="-0.6" r="2.5" fill="#c0f8f0" stroke="#30e8f0" stroke-width="0.7"/><path d="M-3.6 2.4a3.6 3.6 0 0 1 7.2 0" stroke="#28e828" stroke-width="0.6" fill="none"/><rect x="-1.4" y="2.2" width="2.8" height="2.8" fill="#f040f0"/><path d="M5.3 -1h3M5.3 0.4h4" stroke="#f02020" stroke-width="0.8"/><rect x="5.5" y="-4.85" width="2.4" height="1.6" fill="#ff9a28"/></g>
<path d="M422.6 208.4 L443.4 229.2 L448.0 224.6" stroke="#ff28ff" stroke-width="0.7" fill="none" />
<path d="M383.3 193.6 L383.3 218.0 L408.3 218.0" stroke="#ff28ff" stroke-width="0.9" fill="none" />
<path d="M383.3 193.6 L408.3 193.6 L408.3 218.0" stroke="#4040c0" stroke-width="0.9" fill="none" />
<rect x="384.2" y="194.6" width="3" height="1.8" fill="#ff9a28" opacity="0.85"/>
<rect x="385.6" y="199.4" width="2.6" height="2.6" fill="#f040f0" stroke="#ff28ff" stroke-width="0.5"/>
<path d="M402.6 218a3.4 3.4 0 0 1 5.4 -2.6" stroke="#28e828" stroke-width="0.6" fill="none"/>
<rect x="365.6" y="189.8" width="4.0" height="4.0" stroke="#ff28ff" stroke-width="0.7" fill="none" />
<rect x="407.4" y="231.4" width="4.0" height="4.0" stroke="#ff28ff" stroke-width="0.7" fill="none" />
<path d="M177.6 229.0 L205.5 229.0 L205.5 247.0 L177.6 247.0" stroke="#ff28ff" stroke-width="0.9" fill="none" />
<path d="M177.6 229.0L177.6 247.0" stroke="#808080" stroke-width="1.0" fill="none" />
<path d="M195.2 247.0 L216.4 247.0 L216.4 264.2 L195.2 264.2" stroke="#ff28ff" stroke-width="0.9" fill="none" />
<path d="M195.2 247.0L195.2 264.2" stroke="#808080" stroke-width="1.0" fill="none" />
<path d="M195.2 264.4L279.6 264.4" stroke="#ff28ff" stroke-width="1.0" fill="none" />
<path d="M195.2 265.2L279.6 265.2" stroke="#808080" stroke-width="0.6" fill="none" />
<rect x="178.2" y="229.6" width="4" height="2.4" fill="#ff9a28" opacity="0.85"/>
<rect x="196.0" y="247.6" width="4" height="2.4" fill="#ff9a28" opacity="0.85"/>
<path d="M188.0 236.6h2.8M188.0 237.9h5.0" stroke="#f02020" stroke-width="0.9" fill="none"/>
<rect x="186.6" y="239.6" width="3" height="3" fill="#f040f0" stroke="#ff28ff" stroke-width="0.5"/>
<path d="M203.0 250.6h2.4M203.0 251.9h4.4" stroke="#f02020" stroke-width="0.9" fill="none"/>
<rect x="200.2" y="255.0" width="3" height="3" fill="#f040f0" stroke="#ff28ff" stroke-width="0.5"/>
<rect x="176" y="244" width="3.4" height="3.6" fill="#f7f78c"/><rect x="194" y="261.6" width="3.4" height="3.6" fill="#f7f78c"/><rect x="159.8" y="228" width="3" height="3" fill="#f7f78c"/>
<path d="M200 229.6l4.6 4.6M210.8 247.6l4.6 4.6" stroke="#30e8f0" stroke-width="0.8"/>
<rect x="212.4" y="259.4" width="4.0" height="5.0" stroke="#ff28ff" stroke-width="0.6" fill="none" />
<rect x="264.0" y="259.8" width="4.2" height="4.6" stroke="#ff28ff" stroke-width="0.6" fill="none" />
<path d="M266.0 259.8L266.0 264.4" stroke="#ff28ff" stroke-width="0.5" fill="none" />
<rect x="224.4" y="204.4" width="28.0" height="14.8" stroke="#ff28ff" stroke-width="1.3" fill="none" />
<rect x="230.6" y="207.4" width="4.8" height="3.8" fill="#ff9a28"/><path d="M225.6 206v8" stroke="#2828e0" stroke-width="1"/><path d="M225.6 210h22" stroke="#30e8f0" stroke-width="0.5"/>
<path d="M223.4 240.4 L223.4 226.4 L237.6 226.4 L237.6 240.4" stroke="#ff28ff" stroke-width="0.7" fill="none" />
<rect x="224.0" y="227.0" width="3.4" height="1.8" fill="#ff9a28" opacity="0.85"/>
<path d="M223.4 240.4 L223.4 255.0 L237.6 255.0 L237.6 240.4" stroke="#ff28ff" stroke-width="0.7" fill="none" />
<path d="M223.4 240.4L237.6 240.4" stroke="#ff28ff" stroke-width="0.7" fill="none" />
<rect x="224.0" y="241.0" width="3.4" height="1.8" fill="#ff9a28" opacity="0.85"/>
<rect x="225.2" y="243.8" width="2.0" height="8.0" stroke="#28e828" stroke-width="0.7" fill="#d8fcd8" />
<circle cx="232.2" cy="248.0" r="2.8" stroke="#30e8f0" stroke-width="0.7" fill="#c8f8f8"/>
<path d="M230.4 252.0h2.2M230.4 253.3h4.0" stroke="#f02020" stroke-width="0.9" fill="none"/>
<path d="M228.4 251.0a4 4.6 0 0 1 8 0" stroke="#28e828" stroke-width="0.6" fill="#d0fae8"/>
<path d="M237.6 240.4 L237.6 226.4 L251.8 226.4 L251.8 240.4" stroke="#ff28ff" stroke-width="0.7" fill="none" />
<rect x="238.2" y="227.0" width="3.4" height="1.8" fill="#ff9a28" opacity="0.85"/>
<rect x="239.4" y="229.4" width="2.0" height="8.0" stroke="#28e828" stroke-width="0.7" fill="#d8fcd8" />
<circle cx="246.2" cy="232.0" r="2.4" stroke="#30e8f0" stroke-width="0.7" fill="#c8f8f8"/>
<path d="M244.6 228.0h2.0M244.6 229.3h3.6" stroke="#f02020" stroke-width="0.9" fill="none"/>
<rect x="244.8" y="235.4" width="3" height="8" rx="1.3" fill="#f8a0f8" stroke="#ff28ff" stroke-width="0.7"/>
<path d="M237.6 240.4 L237.6 255.0 L251.8 255.0 L251.8 240.4" stroke="#ff28ff" stroke-width="0.7" fill="none" />
<path d="M237.6 240.4L251.8 240.4" stroke="#ff28ff" stroke-width="0.7" fill="none" />
<rect x="238.2" y="241.0" width="3.4" height="1.8" fill="#ff9a28" opacity="0.85"/>
<rect x="239.4" y="243.8" width="2.0" height="8.0" stroke="#28e828" stroke-width="0.7" fill="#d8fcd8" />
<circle cx="246.4" cy="248.0" r="2.8" stroke="#30e8f0" stroke-width="0.7" fill="#c8f8f8"/>
<path d="M244.6 252.0h2.2M244.6 253.3h4.0" stroke="#f02020" stroke-width="0.9" fill="none"/>
<path d="M242.6 251.0a4 4.6 0 0 1 8 0" stroke="#28e828" stroke-width="0.6" fill="#d0fae8"/>
<path d="M251.8 240.4 L251.8 255.0 L266.0 255.0 L266.0 240.4" stroke="#ff28ff" stroke-width="0.7" fill="none" />
<path d="M251.8 240.4L266.0 240.4" stroke="#ff28ff" stroke-width="0.7" fill="none" />
<rect x="252.4" y="241.0" width="3.4" height="1.8" fill="#ff9a28" opacity="0.85"/>
<rect x="253.6" y="243.8" width="2.0" height="8.0" stroke="#28e828" stroke-width="0.7" fill="#d8fcd8" />
<circle cx="260.6" cy="248.0" r="2.8" stroke="#30e8f0" stroke-width="0.7" fill="#c8f8f8"/>
<path d="M258.8 252.0h2.2M258.8 253.3h4.0" stroke="#f02020" stroke-width="0.9" fill="none"/>
<path d="M256.8 251.0a4 4.6 0 0 1 8 0" stroke="#28e828" stroke-width="0.6" fill="#d0fae8"/>
<rect x="230.6" y="241.4" width="2.6" height="2.6" fill="#f040f0" stroke="#ff28ff" stroke-width="0.5"/>
<path d="M259.2 203.2L356.6 203.2" stroke="#6464dc" stroke-width="1.6" fill="none" />
<rect x="270.2" y="199.4" width="15.6" height="3.6" stroke="#28e828" stroke-width="0.7" fill="none" />
<path d="M274 203a2 2 0 0 1 4 0M279 203a2 2 0 0 1 4 0" stroke="#28e828" stroke-width="0.6" fill="none"/>
<path d="M267.0 203.2 L267.0 209.1 L288.2 209.1" stroke="#808080" stroke-width="0.8" fill="none" />
<path d="M288.2 203.2 L288.2 215.5 L309.3 235.9 L334.0 235.9 L356.6 213.3" stroke="#808080" stroke-width="0.9" fill="none" />
<rect x="296.6" y="203.2" width="35.3" height="17.9" stroke="#808080" stroke-width="0.9" fill="none" />
<path d="M296.6 213.3 L301.5 213.3 L301.5 221.1" stroke="#808080" stroke-width="0.7" fill="none" />
<path d="M301.5 203.2 L301.5 208.0" stroke="#808080" stroke-width="0.7" fill="none" />
<rect x="307.2" y="208.4" width="18.3" height="12.0" stroke="#808080" stroke-width="0.6" fill="none" />
<path d="M307.2 214.5L325.5 214.5" stroke="#808080" stroke-width="0.8" fill="none" />
<path d="M309.2 208.4L309.2 220.4" stroke="#808080" stroke-width="0.5" fill="none" />
<path d="M311.3 208.4L311.3 220.4" stroke="#808080" stroke-width="0.5" fill="none" />
<path d="M313.3 208.4L313.3 220.4" stroke="#808080" stroke-width="0.5" fill="none" />
<path d="M315.3 208.4L315.3 220.4" stroke="#808080" stroke-width="0.5" fill="none" />
<path d="M317.3 208.4L317.3 220.4" stroke="#808080" stroke-width="0.5" fill="none" />
<path d="M319.4 208.4L319.4 220.4" stroke="#808080" stroke-width="0.5" fill="none" />
<path d="M321.4 208.4L321.4 220.4" stroke="#808080" stroke-width="0.5" fill="none" />
<path d="M323.4 208.4L323.4 220.4" stroke="#808080" stroke-width="0.5" fill="none" />
<path d="M301.5 214.0L301.5 220.0" stroke="#2828e0" stroke-width="1" fill="none" />
<path d="M297 217a3.6 3.6 0 0 1 4 -3.4M302 205a3 3 0 0 0 4 3" stroke="#28e828" stroke-width="0.6" fill="none"/>
<path d="M309.3 244.4L345.0 244.4" stroke="#808080" stroke-width="0.8" fill="none" />
<path d="M320.2 235.9 L324.6 244.4" stroke="#808080" stroke-width="0.6" fill="none" />
<path d="M331.0 235.9 L325.6 244.4" stroke="#808080" stroke-width="0.6" fill="none" />
<path d="M309.3 235.9L309.3 244.4" stroke="#ff28ff" stroke-width="0.9" fill="none" />
<circle cx="324.2" cy="243.8" r="1.8" stroke="#ff28ff" stroke-width="0.8" fill="none"/>
<path d="M260.4 203.2 L260.4 224.6 L280.4 244.4 L309.3 244.4" stroke="#ff28ff" stroke-width="0.9" fill="none" />
<path d="M288.9 215.5L288.9 244.4" stroke="#ff28ff" stroke-width="0.9" fill="none" />
<rect x="261" y="210" width="4.2" height="3.6" fill="#ff9a28" opacity="0.8"/><path d="M290 224.6l4-4.4v4.4z" fill="#ff9a28" opacity="0.8"/>
<rect x="269.6" y="212.2" width="3" height="3" fill="#f040f0" stroke="#ff28ff" stroke-width="0.5"/>
<path d="M277 241a3.6 3.6 0 0 1 5-4.6M289.4 244a3.8 3.8 0 0 1 5.2-.2M312 244.8v4.6a4.4 4.4 0 0 0 4.4-4.6" stroke="#28e828" stroke-width="0.6" fill="none"/>
<path d="M275.0 239.0L280.0 244.0" stroke="#2828e0" stroke-width="1" fill="none" />
<path d="M312.0 244.8L317.6 244.8" stroke="#2828e0" stroke-width="1" fill="none" />
<g transform="translate(352.6,227.4) rotate(-43)"><rect x="-14.2" y="-6.3" width="28.4" height="12.6" stroke="#808080" stroke-width="0.8" fill="none"/><rect x="-13" y="-5" width="12" height="10" stroke="#808080" stroke-width="0.7" fill="none"/><rect x="1" y="-5" width="12" height="10" stroke="#808080" stroke-width="0.7" fill="none"/><path d="M-11 6.4h8M3 6.4h8" stroke="#2828e0" stroke-width="1.1"/><path d="M-14.2 7.8h28.4" stroke="#808080" stroke-width="0.6"/></g>
<g transform="translate(373.0,248.6) rotate(-43)"><rect x="-14.2" y="-6.3" width="28.4" height="12.6" stroke="#808080" stroke-width="0.8" fill="none"/><rect x="-13" y="-5" width="12" height="10" stroke="#808080" stroke-width="0.7" fill="none"/><rect x="1" y="-5" width="12" height="10" stroke="#808080" stroke-width="0.7" fill="none"/><path d="M-11 6.4h8M3 6.4h8" stroke="#2828e0" stroke-width="1.1"/><path d="M-14.2 7.8h28.4" stroke="#808080" stroke-width="0.6"/></g>
<path d="M336.6 231.4 L327.0 241.0 L327.0 244.4" stroke="#808080" stroke-width="0.7" fill="none" />
<path d="M342.6 209.2 L342.6 214.0 L348.0 219.4" stroke="#808080" stroke-width="0.7" fill="none" />
<rect x="342.6" y="204.2" width="14.0" height="5.0" stroke="#28e828" stroke-width="0.6" fill="#b8f4ec" />
<path d="M369.4 224.7L378.6 233.1" stroke="#5050c8" stroke-width="1.1" fill="none" />
<path d="M356.6 213.3 L360.0 210.0 L369.4 219.6 L369.4 224.7" stroke="#808080" stroke-width="0.7" fill="none" />
<path d="M378.6 233.1 L385.7 233.1 L397.6 245.1 L397.6 340.4" stroke="#808080" stroke-width="0.9" fill="none" />
<path d="M378.6 233.1 L385.7 233.1 L397.6 245.1" stroke="#28e828" stroke-width="0.5" fill="none" />
<rect x="364.4" y="226.4" width="3.6" height="3" fill="#f7f78c"/><path d="M346 247.6l5.6 7.6 2.4-2z" fill="#f7f78c"/><path d="M369 221l9 9" stroke="#f7f78c" stroke-width="1.6" opacity="0.7"/>
<path d="M250.0 263.0L281.0 263.0" stroke="#ff28ff" stroke-width="1.0" fill="none" />
<path d="M250.0 263.8L281.0 263.8" stroke="#808080" stroke-width="0.5" fill="none" />
<path d="M281.0 263.0 L281.0 256.4 L310.3 256.4 L310.3 278.5" stroke="#ff28ff" stroke-width="0.9" fill="none" />
<path d="M310.3 278.5L304.4 284.3" stroke="#2828e0" stroke-width="1" fill="none" />
<path d="M282.6 264.2L337.0 318.6" stroke="#808080" stroke-width="1.3" fill="none" />
<path d="M283.4 263.4L337.8 317.8" stroke="#ff28ff" stroke-width="0.7" fill="none" />
<path d="M322.0 290.5 L344.6 290.5 L344.6 319.5 L337.0 319.5" stroke="#ff28ff" stroke-width="0.9" fill="none" />
<path d="M317.0 296.9L322.0 290.5" stroke="#2828e0" stroke-width="1" fill="none" />
<path d="M337.4 318.6L337.4 405.7" stroke="#808080" stroke-width="1.0" fill="none" />
<path d="M338.3 318.6L338.3 405.7" stroke="#ff28ff" stroke-width="0.7" fill="none" />
<rect x="283.6" y="257.0" width="4" height="2" fill="#ff9a28" opacity="0.85"/>
<rect x="324.0" y="291.4" width="4" height="2" fill="#ff9a28" opacity="0.85"/>
<rect x="337.6" y="317.0" width="3.4" height="3" fill="#ff9a28" opacity="0.85"/>
<path d="M281.6 270.6h4.6a4.6 4.6 0 0 0-1.4-3.4M302 283a4 4 0 0 1 5.8-3.6M318.6 297.4a4 4 0 0 0 4.6-4.6M329 318a4 4 0 0 1 2.6-5" stroke="#28e828" stroke-width="0.6" fill="none"/>
<circle cx="310.6" cy="257.6" r="1.0" stroke="#ff28ff" stroke-width="0.6" fill="none"/>
<circle cx="310.6" cy="277.0" r="1.0" stroke="#ff28ff" stroke-width="0.6" fill="none"/>
<circle cx="322.6" cy="290.8" r="1.0" stroke="#ff28ff" stroke-width="0.6" fill="none"/>
<circle cx="343.6" cy="290.8" r="1.0" stroke="#ff28ff" stroke-width="0.6" fill="none"/>
<path d="M266.0 264.6L266.0 277.8" stroke="#f7f78c" stroke-width="1.6" fill="none" />
<path d="M264.4 278.6L322.2 336.4" stroke="#f7f78c" stroke-width="0.8" fill="none" />
<path d="M266.6 276.6L324.2 334.2" stroke="#f7f78c" stroke-width="0.8" fill="none" />
<path d="M265.4 277.6L323.2 335.4" stroke="#fafaa0" stroke-width="1.6" fill="none" />
<path d="M322.2 334.6L337.0 334.6" stroke="#f7f78c" stroke-width="1.2" fill="none" />
<path d="M264.6 277.4l2.4 2.4M321.6 334.6l2.4 2.4" stroke="#909030" stroke-width="0.8"/>
<rect x="338.0" y="332.8" width="3.6" height="5.0" stroke="#ff28ff" stroke-width="0.6" fill="none" />
<path d="M356.6 253.0 L356.6 320.9 L377.4 340.3 L396.8 340.3" stroke="#808080" stroke-width="1.0" fill="none" />
<path d="M355.6 277.0 L355.6 321.4 L376.8 341.3 L396.8 341.3" stroke="#ff28ff" stroke-width="0.8" fill="none" />
<path d="M397.4 250.0L397.4 258.0" stroke="#2828e0" stroke-width="1.2" fill="none" />
<path d="M397.4 262.0L397.4 270.0" stroke="#2828e0" stroke-width="1.2" fill="none" />
<path d="M397.4 290.0L397.4 298.0" stroke="#2828e0" stroke-width="1.2" fill="none" />
<path d="M397.4 312.0L397.4 320.0" stroke="#2828e0" stroke-width="1.2" fill="none" />
<path d="M397.4 324.0L397.4 332.0" stroke="#2828e0" stroke-width="1.2" fill="none" />
<path d="M356.4 282.0L356.4 288.0" stroke="#2828e0" stroke-width="1" fill="none" />
<path d="M356.4 306.0L356.4 316.0" stroke="#2828e0" stroke-width="1" fill="none" />
<path d="M398 249.4a3.8 3.8 0 0 1 3.8 3.8h-3.8" stroke="#28e828" stroke-width="0.6" fill="none"/>
<path d="M398 263.4a3.8 3.8 0 0 1 3.8 3.8h-3.8" stroke="#28e828" stroke-width="0.6" fill="none"/>
<path d="M398 290.79999999999995a3.8 3.8 0 0 1 3.8 3.8h-3.8" stroke="#28e828" stroke-width="0.6" fill="none"/>
<path d="M398 313.79999999999995a3.8 3.8 0 0 1 3.8 3.8h-3.8" stroke="#28e828" stroke-width="0.6" fill="none"/>
<path d="M398 320.79999999999995a3.8 3.8 0 0 1 3.8 3.8h-3.8" stroke="#28e828" stroke-width="0.6" fill="none"/>
<path d="M356 289.6h-4a4 4 0 0 1 4-4.2M357 316h4a4 4 0 0 0-4-4.2M390 340a3.6 3.6 0 0 0-3.6-3.8" stroke="#28e828" stroke-width="0.6" fill="none"/>
<path d="M361.5 269.7L393.2 301.5" stroke="#808080" stroke-width="0.8" fill="none" />
<path d="M365.9 291.8L391.5 313.0" stroke="#808080" stroke-width="0.8" fill="none" />
<path d="M391.5 313.0 L391.5 335.9" stroke="#808080" stroke-width="0.8" fill="none" />
<path d="M367.6 287.4L393.2 262.6" stroke="#808080" stroke-width="0.8" fill="none" />
<path d="M377.4 303.2L395.9 284.7" stroke="#808080" stroke-width="0.8" fill="none" />
<path d="M358.0 272.4L367.6 262.4" stroke="#808080" stroke-width="0.7" fill="none" />
<path d="M366.0 291.6L366.0 279.0" stroke="#808080" stroke-width="0.6" fill="none" />
<path d="M380.4 262.0L386.0 267.6" stroke="#808080" stroke-width="0.8" fill="none" />
<path d="M384.0 258.6L389.6 264.2" stroke="#808080" stroke-width="0.6" fill="none" />
<path d="M380.0 275.0L385.6 280.6" stroke="#808080" stroke-width="0.8" fill="none" />
<path d="M383.0 272.0L387.0 276.0" stroke="#808080" stroke-width="0.6" fill="none" />
<path d="M388.6 289.0L395.4 295.6" stroke="#808080" stroke-width="0.7" fill="none" />
<path d="M386.0 292.0L392.8 298.6" stroke="#808080" stroke-width="0.6" fill="none" />
<path d="M361.5 322.6L380.0 305.0" stroke="#30e8f0" stroke-width="0.9" fill="none" />
<path d="M360.6 321.4L379.0 303.8" stroke="#30e8f0" stroke-width="0.7" fill="none" />
<path d="M361.0 322.0L379.5 304.4" stroke="#a0f4f8" stroke-width="1.4" fill="none" />
<rect x="358.0" y="292.0" width="5" height="2.6" fill="#ff9a28" opacity="0.85"/>
<rect x="379.0" y="311.0" width="5" height="2.6" fill="#ff9a28" opacity="0.85"/>
<circle cx="356.2" cy="277.6" r="1.8" stroke="#ff28ff" stroke-width="0.8" fill="none"/>
<rect x="392.2" y="335.0" width="4.0" height="4.4" stroke="#ff28ff" stroke-width="0.8" fill="none" />
<path d="M356.6 253.0L360.4 249.2" stroke="#808080" stroke-width="0.7" fill="none" />
<path d="M408.5 244.2L408.5 272.5" stroke="#ff28ff" stroke-width="0.9" fill="none" />
<path d="M408.5 244.2L417.9 244.2" stroke="#ff28ff" stroke-width="0.8" fill="none" />
<path d="M408.5 258.4L417.9 258.4" stroke="#ff28ff" stroke-width="0.8" fill="none" />
<path d="M408.5 272.5L417.9 272.5" stroke="#ff28ff" stroke-width="0.8" fill="none" />
<rect x="409.5" y="245.2" width="3.6" height="1.8" fill="#ff9a28" opacity="0.85"/>
<rect x="409.5" y="259.4" width="3.6" height="1.8" fill="#ff9a28" opacity="0.85"/>
<path d="M422.6 244.2L422.6 272.5" stroke="#ff28ff" stroke-width="0.9" fill="none" />
<path d="M422.6 244.2L432.0 244.2" stroke="#ff28ff" stroke-width="0.8" fill="none" />
<path d="M422.6 258.4L432.0 258.4" stroke="#ff28ff" stroke-width="0.8" fill="none" />
<path d="M422.6 272.5L432.0 272.5" stroke="#ff28ff" stroke-width="0.8" fill="none" />
<rect x="423.6" y="245.2" width="3.6" height="1.8" fill="#ff9a28" opacity="0.85"/>
<rect x="423.6" y="259.4" width="3.6" height="1.8" fill="#ff9a28" opacity="0.85"/>
<path d="M437.0 244.2L437.0 272.5" stroke="#ff28ff" stroke-width="0.9" fill="none" />
<path d="M437.0 244.2L446.4 244.2" stroke="#ff28ff" stroke-width="0.8" fill="none" />
<path d="M437.0 258.4L446.4 258.4" stroke="#ff28ff" stroke-width="0.8" fill="none" />
<path d="M437.0 272.5L446.4 272.5" stroke="#ff28ff" stroke-width="0.8" fill="none" />
<rect x="438.0" y="245.2" width="3.6" height="1.8" fill="#ff9a28" opacity="0.85"/>
<rect x="438.0" y="259.4" width="3.6" height="1.8" fill="#ff9a28" opacity="0.85"/>
<path d="M451.1 244.2L451.1 272.5" stroke="#ff28ff" stroke-width="0.9" fill="none" />
<path d="M451.1 244.2L460.5 244.2" stroke="#ff28ff" stroke-width="0.8" fill="none" />
<path d="M451.1 258.4L460.5 258.4" stroke="#ff28ff" stroke-width="0.8" fill="none" />
<path d="M451.1 272.5L460.5 272.5" stroke="#ff28ff" stroke-width="0.8" fill="none" />
<rect x="452.1" y="245.2" width="3.6" height="1.8" fill="#ff9a28" opacity="0.85"/>
<rect x="452.1" y="259.4" width="3.6" height="1.8" fill="#ff9a28" opacity="0.85"/>
<path d="M408.5 295.8L408.5 324.5" stroke="#ff28ff" stroke-width="0.9" fill="none" />
<path d="M408.5 295.8L417.9 295.8" stroke="#ff28ff" stroke-width="0.8" fill="none" />
<path d="M408.5 310.4L417.9 310.4" stroke="#ff28ff" stroke-width="0.8" fill="none" />
<path d="M408.5 324.5L417.9 324.5" stroke="#ff28ff" stroke-width="0.8" fill="none" />
<rect x="409.5" y="296.8" width="3.6" height="1.8" fill="#ff9a28" opacity="0.85"/>
<rect x="409.5" y="311.4" width="3.6" height="1.8" fill="#ff9a28" opacity="0.85"/>
<path d="M422.6 295.8L422.6 324.5" stroke="#ff28ff" stroke-width="0.9" fill="none" />
<path d="M422.6 295.8L432.0 295.8" stroke="#ff28ff" stroke-width="0.8" fill="none" />
<path d="M422.6 310.4L432.0 310.4" stroke="#ff28ff" stroke-width="0.8" fill="none" />
<path d="M422.6 324.5L432.0 324.5" stroke="#ff28ff" stroke-width="0.8" fill="none" />
<rect x="423.6" y="296.8" width="3.6" height="1.8" fill="#ff9a28" opacity="0.85"/>
<rect x="423.6" y="311.4" width="3.6" height="1.8" fill="#ff9a28" opacity="0.85"/>
<path d="M437.0 295.8L437.0 324.5" stroke="#ff28ff" stroke-width="0.9" fill="none" />
<path d="M437.0 295.8L446.4 295.8" stroke="#ff28ff" stroke-width="0.8" fill="none" />
<path d="M437.0 310.4L446.4 310.4" stroke="#ff28ff" stroke-width="0.8" fill="none" />
<path d="M437.0 324.5L446.4 324.5" stroke="#ff28ff" stroke-width="0.8" fill="none" />
<rect x="438.0" y="296.8" width="3.6" height="1.8" fill="#ff9a28" opacity="0.85"/>
<rect x="438.0" y="311.4" width="3.6" height="1.8" fill="#ff9a28" opacity="0.85"/>
<path d="M451.1 295.8L451.1 324.5" stroke="#ff28ff" stroke-width="0.9" fill="none" />
<path d="M451.1 295.8L460.5 295.8" stroke="#ff28ff" stroke-width="0.8" fill="none" />
<path d="M451.1 310.4L460.5 310.4" stroke="#ff28ff" stroke-width="0.8" fill="none" />
<path d="M451.1 324.5L460.5 324.5" stroke="#ff28ff" stroke-width="0.8" fill="none" />
<rect x="452.1" y="296.8" width="3.6" height="1.8" fill="#ff9a28" opacity="0.85"/>
<rect x="452.1" y="311.4" width="3.6" height="1.8" fill="#ff9a28" opacity="0.85"/>
<path d="M459.0 244.2L468.4 244.2" stroke="#ff28ff" stroke-width="0.8" fill="none" />
<path d="M459.0 272.5L468.4 272.5" stroke="#ff28ff" stroke-width="0.8" fill="none" />
<path d="M459.0 295.8L468.4 295.8" stroke="#ff28ff" stroke-width="0.8" fill="none" />
<path d="M459.0 310.4L468.4 310.4" stroke="#ff28ff" stroke-width="0.8" fill="none" />
<path d="M459.0 324.5L468.4 324.5" stroke="#ff28ff" stroke-width="0.8" fill="none" />
<rect x="423.8" y="247.6" width="2.4" height="9.0" stroke="#28e828" stroke-width="0.7" fill="#d8fcd8" />
<rect x="427.0" y="246.2" width="9.0" height="8.4" stroke="#28e828" stroke-width="0.7" fill="#c0f6e0" />
<circle cx="431.4" cy="250.2" r="3.0" stroke="#30e8f0" stroke-width="0.7" fill="#c8f8f8"/>
<rect x="430.0" y="253.8" width="2.8" height="5.6" rx="1.1" fill="#f8a0f8" stroke="#ff28ff" stroke-width="0.6"/>
<path d="M426.6 256.8a4.6 4 0 0 0 9.2 0" stroke="#28e828" stroke-width="0.6" fill="none"/>
<path d="M428.2 245.2h1.9M428.2 246.5h3.4" stroke="#f02020" stroke-width="0.9" fill="none"/>
<rect x="438.2" y="247.6" width="2.4" height="9.0" stroke="#28e828" stroke-width="0.7" fill="#d8fcd8" />
<rect x="441.4" y="246.2" width="9.0" height="8.4" stroke="#28e828" stroke-width="0.7" fill="#c0f6e0" />
<circle cx="445.8" cy="250.2" r="3.0" stroke="#30e8f0" stroke-width="0.7" fill="#c8f8f8"/>
<rect x="444.4" y="253.8" width="2.8" height="5.6" rx="1.1" fill="#f8a0f8" stroke="#ff28ff" stroke-width="0.6"/>
<path d="M441.0 256.8a4.6 4 0 0 0 9.2 0" stroke="#28e828" stroke-width="0.6" fill="none"/>
<path d="M442.6 245.2h1.9M442.6 246.5h3.4" stroke="#f02020" stroke-width="0.9" fill="none"/>
<rect x="454.3" y="247.6" width="2.4" height="9.0" stroke="#28e828" stroke-width="0.7" fill="#d8fcd8" />
<rect x="457.5" y="246.2" width="9.0" height="8.4" stroke="#28e828" stroke-width="0.7" fill="#c0f6e0" />
<circle cx="461.9" cy="250.2" r="3.0" stroke="#30e8f0" stroke-width="0.7" fill="#c8f8f8"/>
<rect x="460.5" y="253.8" width="2.8" height="5.6" rx="1.1" fill="#f8a0f8" stroke="#ff28ff" stroke-width="0.6"/>
<path d="M457.1 256.8a4.6 4 0 0 0 9.2 0" stroke="#28e828" stroke-width="0.6" fill="none"/>
<path d="M458.7 245.2h1.9M458.7 246.5h3.4" stroke="#f02020" stroke-width="0.9" fill="none"/>
<rect x="438.2" y="261.8" width="2.4" height="9.0" stroke="#28e828" stroke-width="0.7" fill="#d8fcd8" />
<rect x="441.4" y="260.4" width="9.0" height="8.4" stroke="#28e828" stroke-width="0.7" fill="#c0f6e0" />
<circle cx="445.8" cy="264.4" r="3.0" stroke="#30e8f0" stroke-width="0.7" fill="#c8f8f8"/>
<rect x="444.4" y="268.0" width="2.8" height="5.6" rx="1.1" fill="#f8a0f8" stroke="#ff28ff" stroke-width="0.6"/>
<path d="M441.0 271.0a4.6 4 0 0 0 9.2 0" stroke="#28e828" stroke-width="0.6" fill="none"/>
<path d="M442.6 259.4h1.9M442.6 260.7h3.4" stroke="#f02020" stroke-width="0.9" fill="none"/>
<path d="M442.0 270.0h2.0M442.0 271.3h3.6" stroke="#f02020" stroke-width="0.9" fill="none"/>
<rect x="454.3" y="261.8" width="2.4" height="9.0" stroke="#28e828" stroke-width="0.7" fill="#d8fcd8" />
<rect x="457.5" y="260.4" width="9.0" height="8.4" stroke="#28e828" stroke-width="0.7" fill="#c0f6e0" />
<circle cx="461.9" cy="264.4" r="3.0" stroke="#30e8f0" stroke-width="0.7" fill="#c8f8f8"/>
<rect x="460.5" y="268.0" width="2.8" height="5.6" rx="1.1" fill="#f8a0f8" stroke="#ff28ff" stroke-width="0.6"/>
<path d="M457.1 271.0a4.6 4 0 0 0 9.2 0" stroke="#28e828" stroke-width="0.6" fill="none"/>
<path d="M458.7 259.4h1.9M458.7 260.7h3.4" stroke="#f02020" stroke-width="0.9" fill="none"/>
<path d="M456.1 270.0h2.0M456.1 271.3h3.6" stroke="#f02020" stroke-width="0.9" fill="none"/>
<rect x="408.0" y="282.2" width="59.8" height="5.3" stroke="#ff28ff" stroke-width="0.7" fill="#fff" />
<rect x="411.5" y="283.0" width="24.6" height="3.8" stroke="#111" stroke-width="0.6" fill="#fff" />
<rect x="436.1" y="282.8" width="31.4" height="4.2" stroke="#f06060" stroke-width="0.6" fill="#fcd0c8" />
<path d="M444.0 282.8L444.0 287.0" stroke="#f06060" stroke-width="0.5" fill="none" />
<path d="M451.8 282.8L451.8 287.0" stroke="#f06060" stroke-width="0.5" fill="none" />
<path d="M459.7 282.8L459.7 287.0" stroke="#f06060" stroke-width="0.5" fill="none" />
<text x="413" y="286.3" font-family="Liberation Sans, sans-serif" font-size="3.3" font-weight="bold" fill="#111" textLength="21.8" lengthAdjust="spacingAndGlyphs">PRINTER ISLAND</text>
<path d="M337.6 404.8 L354.8 404.8" stroke="#ff28ff" stroke-width="0.9" fill="none" />
<path d="M337.4 405.6L354.8 405.6" stroke="#808080" stroke-width="0.6" fill="none" />
<rect x="354.8" y="392.7" width="17.7" height="29.8" stroke="#808080" stroke-width="0.9" fill="none" />
<path d="M354.8 392.7L372.5 392.7" stroke="#ff28ff" stroke-width="0.7" fill="none" />
<path d="M372.5 392.7L372.5 440.1" stroke="#ff28ff" stroke-width="0.8" fill="none" />
<path d="M367 392.7v4a4 4 0 0 0 4-4" stroke="#28e828" stroke-width="0.6" fill="none"/>
<path d="M366.4 392.7L371.6 392.7" stroke="#2828e0" stroke-width="1" fill="none" />
<rect x="356.0" y="393.6" width="3.6" height="2" fill="#ff9a28" opacity="0.85"/>
<rect x="336" y="332" width="3" height="3" fill="#f7f78c"/>
<rect x="336" y="387.4" width="3" height="3" fill="#f7f78c"/>
<rect x="336.6" y="403.6" width="3" height="3" fill="#f7f78c"/>
<rect x="353.6" y="421.4" width="3" height="3" fill="#f7f78c"/>
<rect x="371" y="438.6" width="3" height="3" fill="#f7f78c"/>
<rect x="467.4" y="438.6" width="3" height="3" fill="#f7f78c"/>
<rect x="338.4" y="333.6" width="3.4" height="4.6" stroke="#ff28ff" stroke-width="0.6" fill="none" />
<rect x="338.4" y="385.0" width="3.4" height="4.6" stroke="#ff28ff" stroke-width="0.6" fill="none" />
<rect x="465.0" y="333.6" width="3.4" height="4.6" stroke="#ff28ff" stroke-width="0.6" fill="none" />
<rect x="465.0" y="384.6" width="3.4" height="4.6" stroke="#ff28ff" stroke-width="0.6" fill="none" />
<rect x="372.5" y="420.3" width="95.9" height="19.8" stroke="#ff28ff" stroke-width="0.9" fill="none" />
<path d="M392.7 420.3L392.7 440.1" stroke="#ff28ff" stroke-width="0.8" fill="none" />
<path d="M416.5 420.3L416.5 440.1" stroke="#ff28ff" stroke-width="0.8" fill="none" />
<path d="M442.3 420.3L442.3 440.1" stroke="#ff28ff" stroke-width="0.8" fill="none" />
<path d="M372.5 441.0L468.4 441.0" stroke="#808080" stroke-width="0.7" fill="none" />
<rect x="374.9" y="426.2" width="11.2" height="12.4" stroke="#28e828" stroke-width="0.6" fill="#e4fce4" />
<rect x="376.9" y="424.8" width="7.2" height="15.2" stroke="#30e8f0" stroke-width="0.6" fill="#d0f8f8" />
<circle cx="376.1" cy="430.0" r="2.0" stroke="#30e8f0" stroke-width="0.7" fill="#c8f8f8"/>
<circle cx="384.9" cy="430.0" r="2.0" stroke="#30e8f0" stroke-width="0.7" fill="#c8f8f8"/>
<circle cx="380.5" cy="436.4" r="1.8" stroke="#30e8f0" stroke-width="0.7" fill="#c8f8f8"/>
<rect x="378.9" y="429.6" width="3.2" height="3.2" fill="#f040f0" stroke="#ff28ff" stroke-width="0.5"/>
<path d="M385.7 428.4h2.2M385.7 429.7h4.0" stroke="#f02020" stroke-width="0.9" fill="none"/>
<rect x="373.5" y="421.0" width="3.4" height="1.8" fill="#ff9a28" opacity="0.85"/>
<path d="M386.7 420.6v4.4a4.4 4.4 0 0 0 4.4-4.4" stroke="#28e828" stroke-width="0.6" fill="none"/>
<rect x="395.1" y="426.2" width="11.2" height="12.4" stroke="#28e828" stroke-width="0.6" fill="#e4fce4" />
<rect x="397.1" y="424.8" width="7.2" height="15.2" stroke="#30e8f0" stroke-width="0.6" fill="#d0f8f8" />
<circle cx="396.3" cy="430.0" r="2.0" stroke="#30e8f0" stroke-width="0.7" fill="#c8f8f8"/>
<circle cx="405.1" cy="430.0" r="2.0" stroke="#30e8f0" stroke-width="0.7" fill="#c8f8f8"/>
<circle cx="400.7" cy="436.4" r="1.8" stroke="#30e8f0" stroke-width="0.7" fill="#c8f8f8"/>
<rect x="399.1" y="429.6" width="3.2" height="3.2" fill="#f040f0" stroke="#ff28ff" stroke-width="0.5"/>
<path d="M409.5 428.4h2.2M409.5 429.7h4.0" stroke="#f02020" stroke-width="0.9" fill="none"/>
<rect x="393.7" y="421.0" width="3.4" height="1.8" fill="#ff9a28" opacity="0.85"/>
<path d="M410.5 420.6v4.4a4.4 4.4 0 0 0 4.4-4.4" stroke="#28e828" stroke-width="0.6" fill="none"/>
<rect x="427.7" y="426.2" width="11.2" height="12.4" stroke="#28e828" stroke-width="0.6" fill="#e4fce4" />
<rect x="429.7" y="424.8" width="7.2" height="15.2" stroke="#30e8f0" stroke-width="0.6" fill="#d0f8f8" />
<circle cx="428.9" cy="430.0" r="2.0" stroke="#30e8f0" stroke-width="0.7" fill="#c8f8f8"/>
<circle cx="437.7" cy="430.0" r="2.0" stroke="#30e8f0" stroke-width="0.7" fill="#c8f8f8"/>
<circle cx="433.3" cy="436.4" r="1.8" stroke="#30e8f0" stroke-width="0.7" fill="#c8f8f8"/>
<rect x="431.7" y="429.6" width="3.2" height="3.2" fill="#f040f0" stroke="#ff28ff" stroke-width="0.5"/>
<path d="M419.5 428.4h2.2M419.5 429.7h4.0" stroke="#f02020" stroke-width="0.9" fill="none"/>
<rect x="417.5" y="421.0" width="3.4" height="1.8" fill="#ff9a28" opacity="0.85"/>
<path d="M436.3 420.6v4.4a4.4 4.4 0 0 0 4.4-4.4" stroke="#28e828" stroke-width="0.6" fill="none"/>
<rect x="453.8" y="426.2" width="11.2" height="12.4" stroke="#28e828" stroke-width="0.6" fill="#e4fce4" />
<rect x="455.8" y="424.8" width="7.2" height="15.2" stroke="#30e8f0" stroke-width="0.6" fill="#d0f8f8" />
<circle cx="455.0" cy="430.0" r="2.0" stroke="#30e8f0" stroke-width="0.7" fill="#c8f8f8"/>
<circle cx="463.8" cy="430.0" r="2.0" stroke="#30e8f0" stroke-width="0.7" fill="#c8f8f8"/>
<circle cx="459.4" cy="436.4" r="1.8" stroke="#30e8f0" stroke-width="0.7" fill="#c8f8f8"/>
<rect x="457.8" y="429.6" width="3.2" height="3.2" fill="#f040f0" stroke="#ff28ff" stroke-width="0.5"/>
<path d="M445.3 428.4h2.2M445.3 429.7h4.0" stroke="#f02020" stroke-width="0.9" fill="none"/>
<rect x="443.3" y="421.0" width="3.4" height="1.8" fill="#ff9a28" opacity="0.85"/>
<path d="M462.4 420.6v4.4a4.4 4.4 0 0 0 4.4-4.4" stroke="#28e828" stroke-width="0.6" fill="none"/>
<path d="M432 441.4v4.2a4.2 4.2 0 0 0 4.2-4.2" stroke="#28e828" stroke-width="0.6" fill="none"/>
<path d="M346.5 335.0L346.5 376.9" stroke="#ff28ff" stroke-width="0.9" fill="none" />
<path d="M361.0 335.0L361.0 376.9" stroke="#ff28ff" stroke-width="0.9" fill="none" />
<path d="M346.5 335.0L356.5 335.0" stroke="#ff28ff" stroke-width="0.8" fill="none" />
<path d="M346.5 348.6L356.5 348.6" stroke="#ff28ff" stroke-width="0.8" fill="none" />
<path d="M361.0 348.6L370.6 348.6" stroke="#ff28ff" stroke-width="0.8" fill="none" />
<path d="M346.5 362.5L356.5 362.5" stroke="#ff28ff" stroke-width="0.8" fill="none" />
<path d="M361.0 362.5L370.6 362.5" stroke="#ff28ff" stroke-width="0.8" fill="none" />
<path d="M346.5 376.9L356.5 376.9" stroke="#ff28ff" stroke-width="0.8" fill="none" />
<path d="M361.0 376.9L370.6 376.9" stroke="#ff28ff" stroke-width="0.8" fill="none" />
<rect x="347.5" y="336.0" width="3.6" height="1.8" fill="#ff9a28" opacity="0.85"/>
<rect x="347.5" y="349.6" width="3.6" height="1.8" fill="#ff9a28" opacity="0.85"/>
<rect x="362.0" y="349.6" width="3.6" height="1.8" fill="#ff9a28" opacity="0.85"/>
<rect x="347.5" y="363.5" width="3.6" height="1.8" fill="#ff9a28" opacity="0.85"/>
<rect x="362.0" y="363.5" width="3.6" height="1.8" fill="#ff9a28" opacity="0.85"/>
<path d="M375.1 353.6L375.1 376.9" stroke="#ff28ff" stroke-width="0.8" fill="none" />
<path d="M346.5 376.9L375.1 376.9" stroke="#ff28ff" stroke-width="0.9" fill="none" />
<path d="M429.8 333.7L429.8 388.8" stroke="#ff28ff" stroke-width="0.9" fill="none" />
<path d="M443.6 333.7L443.6 388.8" stroke="#ff28ff" stroke-width="0.9" fill="none" />
<path d="M429.8 333.7L439.1 333.7" stroke="#ff28ff" stroke-width="0.8" fill="none" />
<path d="M443.6 333.7L453.5 333.7" stroke="#ff28ff" stroke-width="0.8" fill="none" />
<path d="M429.8 347.5L439.1 347.5" stroke="#ff28ff" stroke-width="0.8" fill="none" />
<path d="M443.6 347.5L453.5 347.5" stroke="#ff28ff" stroke-width="0.8" fill="none" />
<path d="M429.8 361.4L439.1 361.4" stroke="#ff28ff" stroke-width="0.8" fill="none" />
<path d="M443.6 361.4L453.5 361.4" stroke="#ff28ff" stroke-width="0.8" fill="none" />
<path d="M429.8 375.1L439.1 375.1" stroke="#ff28ff" stroke-width="0.8" fill="none" />
<path d="M443.6 375.1L453.5 375.1" stroke="#ff28ff" stroke-width="0.8" fill="none" />
<path d="M429.8 388.8L439.1 388.8" stroke="#ff28ff" stroke-width="0.8" fill="none" />
<path d="M443.6 388.8L453.5 388.8" stroke="#ff28ff" stroke-width="0.8" fill="none" />
<rect x="430.8" y="334.7" width="3.6" height="1.8" fill="#ff9a28" opacity="0.85"/>
<rect x="444.6" y="334.7" width="3.6" height="1.8" fill="#ff9a28" opacity="0.85"/>
<rect x="430.8" y="348.5" width="3.6" height="1.8" fill="#ff9a28" opacity="0.85"/>
<rect x="444.6" y="348.5" width="3.6" height="1.8" fill="#ff9a28" opacity="0.85"/>
<rect x="430.8" y="362.4" width="3.6" height="1.8" fill="#ff9a28" opacity="0.85"/>
<rect x="444.6" y="362.4" width="3.6" height="1.8" fill="#ff9a28" opacity="0.85"/>
<rect x="430.8" y="376.1" width="3.6" height="1.8" fill="#ff9a28" opacity="0.85"/>
<rect x="444.6" y="376.1" width="3.6" height="1.8" fill="#ff9a28" opacity="0.85"/>
<path d="M458.0 352.5L458.0 388.8" stroke="#ff28ff" stroke-width="0.8" fill="none" />
<path d="M429.8 388.8L458.0 388.8" stroke="#ff28ff" stroke-width="0.9" fill="none" />
<path d="M458.0 333.7L458.0 347.0" stroke="#ff28ff" stroke-width="0.8" fill="none" />
<rect x="406.6" y="338.7" width="13.9" height="47.0" stroke="#808080" stroke-width="0.9" fill="none" />
<path d="M406.6 353.0L420.5 353.0" stroke="#808080" stroke-width="0.7" fill="none" />
<rect x="408.4" y="359.7" width="10.4" height="18.7" stroke="#808080" stroke-width="0.6" fill="none" />
<path d="M413.6 359.7L413.6 378.4" stroke="#808080" stroke-width="0.6" fill="none" />
<path d="M408.4 361.8L418.8 361.8" stroke="#808080" stroke-width="0.5" fill="none" />
<path d="M408.4 363.9L418.8 363.9" stroke="#808080" stroke-width="0.5" fill="none" />
<path d="M408.4 365.9L418.8 365.9" stroke="#808080" stroke-width="0.5" fill="none" />
<path d="M408.4 368.0L418.8 368.0" stroke="#808080" stroke-width="0.5" fill="none" />
<path d="M408.4 370.1L418.8 370.1" stroke="#808080" stroke-width="0.5" fill="none" />
<path d="M408.4 372.2L418.8 372.2" stroke="#808080" stroke-width="0.5" fill="none" />
<path d="M408.4 374.3L418.8 374.3" stroke="#808080" stroke-width="0.5" fill="none" />
<path d="M408.4 376.3L418.8 376.3" stroke="#808080" stroke-width="0.5" fill="none" />
<path d="M414.0 372.0L418.0 364.0" stroke="#808080" stroke-width="0.6" fill="none" />
<rect x="408.6" y="334.6" width="3.6" height="4.2" stroke="#ff28ff" stroke-width="0.7" fill="none" />
<rect x="409.4" y="386.0" width="3.6" height="3.4" stroke="#808080" stroke-width="0.6" fill="none" />
<path d="M406.6 378.0L406.6 385.0" stroke="#2828e0" stroke-width="1.1" fill="none" />
<path d="M407 385a4 4 0 0 0 4-4M402.6 338.4a3.6 3.6 0 0 0 4 3.6" stroke="#28e828" stroke-width="0.6" fill="none"/>
<rect x="383.9" y="385.0" width="6.6" height="3.8" stroke="#ff28ff" stroke-width="0.7" fill="none" />
<path d="M383.9 386.9L390.5 386.9" stroke="#ff28ff" stroke-width="0.5" fill="none" />
<path d="M387.9 396.7L468.3 396.7" stroke="#ff28ff" stroke-width="0.9" fill="none" />
<path d="M391.9 396.7L391.9 410.8" stroke="#ff28ff" stroke-width="0.9" fill="none" />
<path d="M391.9 410.8L399.3 410.8" stroke="#ff28ff" stroke-width="0.8" fill="none" />
<rect x="392.9" y="397.6" width="3.4" height="1.8" fill="#ff9a28" opacity="0.85"/>
<path d="M408.8 396.7L408.8 410.8" stroke="#ff28ff" stroke-width="0.9" fill="none" />
<path d="M408.8 410.8L416.2 410.8" stroke="#ff28ff" stroke-width="0.8" fill="none" />
<rect x="409.8" y="397.6" width="3.4" height="1.8" fill="#ff9a28" opacity="0.85"/>
<path d="M422.7 396.7L422.7 410.8" stroke="#ff28ff" stroke-width="0.9" fill="none" />
<path d="M422.7 410.8L430.1 410.8" stroke="#ff28ff" stroke-width="0.8" fill="none" />
<rect x="423.7" y="397.6" width="3.4" height="1.8" fill="#ff9a28" opacity="0.85"/>
<path d="M437.5 396.7L437.5 410.8" stroke="#ff28ff" stroke-width="0.9" fill="none" />
<path d="M437.5 410.8L444.9 410.8" stroke="#ff28ff" stroke-width="0.8" fill="none" />
<rect x="438.5" y="397.6" width="3.4" height="1.8" fill="#ff9a28" opacity="0.85"/>
<path d="M451.3 396.7L451.3 410.8" stroke="#ff28ff" stroke-width="0.9" fill="none" />
<path d="M451.3 410.8L458.7 410.8" stroke="#ff28ff" stroke-width="0.8" fill="none" />
<rect x="452.3" y="397.6" width="3.4" height="1.8" fill="#ff9a28" opacity="0.85"/>
<path d="M466.0 396.7L466.0 410.8" stroke="#ff28ff" stroke-width="0.7" fill="none" />
<path d="M409.0 320.0L409.0 324.5" stroke="#ff28ff" stroke-width="0.8" fill="none" />
<path d="M423.0 320.0L423.0 324.5" stroke="#ff28ff" stroke-width="0.8" fill="none" />
<path d="M437.0 320.0L437.0 324.5" stroke="#ff28ff" stroke-width="0.8" fill="none" />
<path d="M451.0 320.0L451.0 324.5" stroke="#ff28ff" stroke-width="0.8" fill="none" />
<path d="M394 322.6v6M391 336.4h5" stroke="#2828e0" stroke-width="1"/>
<rect x="455.3" y="158.6" width="26" height="25.6" fill="#d8d8d8" fill-opacity="0.78" stroke="#a8a8a8" stroke-width="0.8"/>
<path d="M468.6 158.6v25.6" stroke="#bdbdbd" stroke-width="0.6"/>
<text x="468.4" y="174" font-family="Liberation Sans, sans-serif" font-weight="bold" text-anchor="middle" font-size="6.6" fill="#9a9a9a">TOP</text>
<text x="468.6" y="147.4" font-family="Liberation Sans, sans-serif" font-weight="bold" text-anchor="middle" font-size="10.5" fill="#cbcbcb">N</text>
<text x="441" y="175.4" font-family="Liberation Sans, sans-serif" font-weight="bold" text-anchor="middle" font-size="10.5" fill="#cbcbcb">W</text>
<text x="468.6" y="204.4" font-family="Liberation Sans, sans-serif" font-weight="bold" text-anchor="middle" font-size="10.5" fill="#cbcbcb">S</text>
<text x="497" y="175.8" font-family="Liberation Sans, sans-serif" font-weight="bold" text-anchor="middle" font-size="10.5" fill="#cbcbcb">E</text>
<rect x="454.6" y="217" width="27" height="9.6" rx="4.8" fill="#e4e4e8" fill-opacity="0.85"/>
<text x="465" y="224.4" font-family="Liberation Sans, sans-serif" font-weight="bold" text-anchor="middle" font-size="6.4" fill="#b4b4b8">WCS</text>
<circle cx="477" cy="221.8" r="2.2" fill="#d0d0d4"/>
<circle cx="554.3" cy="172.7" r="39" fill="none" stroke="#3030c0" stroke-width="0.9"/>
<clipPath id="dc"><circle cx="554.3" cy="172.7" r="38.6"/></clipPath><g clip-path="url(#dc)">
<path d="M527.6 150.0L527.6 189.6" stroke="#8a8a8a" stroke-width="0.9" fill="none" />
<path d="M533.0 150.0L533.0 189.6" stroke="#8a8a8a" stroke-width="0.9" fill="none" />
<path d="M538.4 150.0L538.4 189.6" stroke="#8a8a8a" stroke-width="0.9" fill="none" />
<path d="M543.9 150.0L543.9 189.6" stroke="#8a8a8a" stroke-width="0.9" fill="none" />
<path d="M549.3 150.0L549.3 189.6" stroke="#8a8a8a" stroke-width="0.9" fill="none" />
<path d="M554.7 150.0L554.7 189.6" stroke="#8a8a8a" stroke-width="0.9" fill="none" />
<path d="M560.1 150.0L560.1 189.6" stroke="#8a8a8a" stroke-width="0.9" fill="none" />
<path d="M565.5 150.0L565.5 189.6" stroke="#8a8a8a" stroke-width="0.9" fill="none" />
<path d="M571.0 150.0L571.0 189.6" stroke="#8a8a8a" stroke-width="0.9" fill="none" />
<path d="M576.4 150.0L576.4 189.6" stroke="#8a8a8a" stroke-width="0.9" fill="none" />
<path d="M581.8 150.0L581.8 189.6" stroke="#8a8a8a" stroke-width="0.9" fill="none" />
<path d="M526.4 150.2L582.8 150.2" stroke="#808080" stroke-width="1.3" fill="none" />
<path d="M526.4 151.8L582.8 151.8" stroke="#a8a8a8" stroke-width="0.6" fill="none" />
<path d="M526.4 170.0L582.8 170.0" stroke="#808080" stroke-width="1.3" fill="none" />
<path d="M526.4 171.6L582.8 171.6" stroke="#a8a8a8" stroke-width="0.6" fill="none" />
<path d="M526.4 189.4L582.8 189.4" stroke="#808080" stroke-width="1.3" fill="none" />
<path d="M526.4 191.0L582.8 191.0" stroke="#a8a8a8" stroke-width="0.6" fill="none" />
<path d="M544.6 170.6l4.6 0 12.4 19.4h-4.6z" fill="#fff" stroke="#8a8a8a" stroke-width="0.8"/>
<path d="M548.8 132.0L548.8 214.0" stroke="#b0b0b0" stroke-width="0.5" fill="none" />
<path d="M516.0 204.4L596.0 204.4" stroke="#c0c0c0" stroke-width="0.5" fill="none" />
<path d="M516.0 136.6L596.0 136.6" stroke="#c8c8c8" stroke-width="0.5" fill="none" />
<path d="M516.0 192.6L596.0 192.6" stroke="#c0c0c0" stroke-width="0.5" fill="none" />
<path d="M542.4 143v5.6M549.6 143v5.6M542.4 146.4h7.2" stroke="#8a8a8a" stroke-width="0.8" fill="none"/>
</g>
<path d="M337 214.4L519 180.9" stroke="#e01818" stroke-width="2.3" fill="none"/>
<path d="M528.8 179L517.2 177.2 518.6 185z" fill="#e01818"/>
</g>
<g id="icons">
<path d="M13.30 7.70h4.4l-2.20 2.6z" fill="#9fd6d6"/>
<path d="M25 5h7.5l3 2.6V13H25z" fill="#e3e3e3"/><path d="M32.5 5v2.6h3z" fill="#b5b5b5"/>
<path d="M40.5 13V5.3h3.6l1 1.2h4.6V8h-7.2z" fill="#cfcfcf"/><path d="M42.6 8.2h8.4L49.2 13h-8.7z" fill="#ececec"/>
<path d="M56 4.3h10.5V14H56z" fill="#b9bcc0"/><rect x="58" y="4.3" width="6.4" height="3.6" fill="#ececec"/><rect x="57.6" y="9.6" width="7.2" height="4.4" fill="#e6e6e6"/><rect x="60" y="11.8" width="3.5" height="2.2" fill="#fff"/>
<path d="M72 4.3h9V13H72z" fill="#b9bcc0"/><rect x="73.8" y="4.3" width="5.4" height="3.2" fill="#e8e8e8"/><rect x="73.4" y="9.2" width="6" height="3.8" fill="#dedede"/><path d="M78.5 13.2l4.2-4.2 1.2 1.2-4.2 4.2-1.6.4z" fill="#e8c070"/>
<rect x="88.2" y="4" width="6.2" height="10" rx="0.8" fill="#8c929c"/><rect x="89.2" y="5.3" width="4.2" height="6.5" fill="#6d747f"/><circle cx="94.8" cy="11.6" r="2.3" fill="#e6b55e"/><rect x="93" y="12" width="4.2" height="2" fill="#d9d9d9"/>
<rect x="107.6" y="4" width="5.6" height="10.2" rx="0.8" fill="#8c929c"/><rect x="108.5" y="5.4" width="3.8" height="7" fill="#59606b"/><path d="M105 8.9h4.2M107.6 7.2l1.8 1.7-1.8 1.7" stroke="#6cc0f0" stroke-width="1" fill="none"/>
<rect x="121.3" y="4" width="7.6" height="3.2" fill="#f0f0f0"/><rect x="119.2" y="6.8" width="11.8" height="5.2" rx="0.8" fill="#dcdcdc"/><rect x="121.3" y="10" width="7.6" height="4" fill="#fff" stroke="#9aa" stroke-width="0.5"/><rect x="122.3" y="11.3" width="5.6" height="0.7" fill="#888"/>
<path d="M135.8 8.6l4.2-3.6v2.2c3.4 0 6 1.6 6.6 5-1.4-2-3.4-2.6-6.6-2.4v2.4z" fill="#e6e6e6"/>
<path d="M150.40 8.20h3.2l-1.60 2z" fill="#cfd3d8"/>
<path d="M168.4 8.6l-4.2-3.6v2.2c-3.4 0-6 1.6-6.6 5 1.4-2 3.4-2.6 6.6-2.4v2.4z" fill="#6d7480"/>
<path d="M174.10 8.20h3.2l-1.60 2z" fill="#8e949e"/>
<rect x="182.6" y="5.6" width="5" height="0.9" fill="#e0e0e0"/>
<path d="M182.60 7.50h5l-2.50 3z" fill="#e0e0e0"/>
<path d="M194.3 9.2L203.8 4.4 201.6 14l-2.8-2.6-1.6 1.8-.3-2.8 4.6-4-6 3.4z" fill="#41a5ee"/>
<path d="M564.6 6.6v4.8l2.6-2.4z" fill="#e0e0e0"/>
<circle cx="696" cy="8" r="3" fill="none" stroke="#cfd3d8" stroke-width="1"/><path d="M698.2 10.2l2.8 2.8" stroke="#cfd3d8" stroke-width="1.3"/>
<circle cx="712.6" cy="6.4" r="2.7" fill="#4fa8f0"/><path d="M707.4 14c0-3.6 2-5 5.2-5s5.2 1.4 5.2 5z" fill="#4fa8f0"/>
<path d="M777.70 8.65h3l-1.50 1.9z" fill="#cfd3d8"/>
<path d="M787.6 5.2h1.8l1.6 5.6h5l1-4h-6.4" fill="none" stroke="#cfd3d8" stroke-width="1.1"/><circle cx="791.6" cy="12.6" r="0.9" fill="#cfd3d8"/><circle cx="795.4" cy="12.6" r="0.9" fill="#cfd3d8"/><path d="M790 6.8h6.8l-.9 3.6h-4.8z" fill="#cfd3d8"/>
<path d="M808 4.6l4.6 8.4h-9.2z" fill="none" stroke="#e4e6ea" stroke-width="1.5" stroke-linejoin="round"/><circle cx="808" cy="4.6" r="1.1" fill="#e4e6ea"/><circle cx="803.6" cy="13" r="1.1" fill="#e4e6ea"/><circle cx="812.4" cy="13" r="1.1" fill="#e4e6ea"/>
<path d="M817.50 8.65h3l-1.50 1.9z" fill="#cfd3d8"/>
<rect x="827" y="3" width="0.8" height="12.5" fill="#3c4452"/>
<circle cx="839" cy="9.2" r="5" fill="#c9ccd1"/>
<path d="M849.80 8.65h3l-1.50 1.9z" fill="#cfd3d8"/>
<path d="M858.2 9c0-2.8 2-4.6 4.8-4.6s4.8 1.8 4.8 4.6-2 4.6-4.8 4.6c-.8 0-1.4-.1-2-.4l-2.6 1 .7-2.4c-.6-.8-.9-1.7-.9-2.8z" fill="#c9ccd1"/>
<rect x="921.5" y="8" width="8.5" height="1" fill="#e0e0e0"/>
<rect x="952.4" y="5.8" width="6.4" height="6" rx="1.2" fill="none" stroke="#e0e0e0" stroke-width="1"/><path d="M954.2 5.8v-.4c0-.8.5-1.3 1.3-1.3h3.6c.8 0 1.3.5 1.3 1.3v3.6c0 .8-.5 1.3-1.3 1.3h-.3" fill="none" stroke="#e0e0e0" stroke-width="1"/>
<path d="M983 5l7.4 7.4M990.4 5L983 12.4" stroke="#e0e0e0" stroke-width="1.1"/>
<path d="M541.00 26.65h3l-1.50 1.9z" fill="#cfd3d8"/>
<path d="M-1 57L17.6 39.6" stroke="#cdd3dc" stroke-width="0.9" fill="none"/>
<circle cx="17.6" cy="39.6" r="1.1" fill="#e8ecf2"/>
<path d="M26 54H41C45 54 47.2 51.5 47.2 48.6C47.2 45.6 44.5 43.2 40.2 43.6" stroke="#cdd3dc" stroke-width="0.9" fill="none"/>
<circle cx="26.2" cy="54" r="1" fill="#e8ecf2"/>
<circle cx="41" cy="54" r="1" fill="#e8ecf2"/>
<circle cx="40.2" cy="43.6" r="1" fill="#e8ecf2"/>
<circle cx="68.2" cy="48.8" r="10.5" stroke="#cdd3dc" stroke-width="0.9" fill="none"/><path d="M68.2 48.8L74.1 43" stroke="#8fb8e0" stroke-width="0.9"/>
<circle cx="68.2" cy="48.8" r="1" fill="#e8ecf2"/>
<circle cx="74.1" cy="43" r="1" fill="#e8ecf2"/>
<path d="M89.2 58.2C89.6 47 96 40.2 108 39.6" stroke="#cdd3dc" stroke-width="0.9" fill="none"/>
<circle cx="89.2" cy="58.2" r="1" fill="#e8ecf2"/>
<circle cx="108" cy="39.6" r="1" fill="#e8ecf2"/>
<circle cx="94.6" cy="45" r="1" fill="#e8ecf2"/>
<rect x="114" y="40.6" width="10.2" height="7.4" stroke="#cdd3dc" stroke-width="0.9" fill="none"/>
<path d="M129.70 43.45h3l-1.50 1.9z" fill="#dfe2e7"/>
<ellipse cx="119" cy="60.8" rx="5" ry="3.6" stroke="#cdd3dc" stroke-width="0.9" fill="none"/>
<circle cx="119" cy="60.8" r="0.7" fill="#e8ecf2"/>
<path d="M129.70 59.85h3l-1.50 1.9z" fill="#dfe2e7"/>
<rect x="115" y="72.2" width="8" height="10" fill="#6a7686"/><path d="M115 72.2v10M123 72.2v10M117 72.2v10M119 72.2v10M121 72.2v10" stroke="#aab4c2" stroke-width="0.5"/>
<path d="M129.70 76.25h3l-1.50 1.9z" fill="#dfe2e7"/>
<path d="M66.70 74.65h3l-1.50 1.9z" fill="#dfe2e7"/>
<path d="M96.50 74.65h3l-1.50 1.9z" fill="#dfe2e7"/>
<path d="M75.80 92.50h4.2l-2.10 2.6z" fill="#dfe2e7"/>
<path d="M209.80 92.50h4.2l-2.10 2.6z" fill="#dfe2e7"/>
<path d="M322.70 92.50h4.2l-2.10 2.6z" fill="#dfe2e7"/>
<path d="M452.10 92.50h4.2l-2.10 2.6z" fill="#dfe2e7"/>
<path d="M593.40 92.50h4.2l-2.10 2.6z" fill="#dfe2e7"/>
<path d="M722.50 92.50h4.2l-2.10 2.6z" fill="#dfe2e7"/>
<path d="M816.50 92.50h4.2l-2.10 2.6z" fill="#dfe2e7"/>
<path d="M871.60 92.50h4.2l-2.10 2.6z" fill="#dfe2e7"/>
<path d="M974.60 92.50h4.2l-2.10 2.6z" fill="#dfe2e7"/>
<path d="M776 92.2l2.6 2.6M778.6 92.6v2.2h-2.2" stroke="#cfd3d8" stroke-width="0.8" fill="none"/>
<path d="M985.2 92.2l2.6 2.6M987.8 92.6v2.2h-2.2" stroke="#cfd3d8" stroke-width="0.8" fill="none"/>
<path d="M148.8 39.6v10.4M143.6 44.8h10.4" stroke="#f0f2f5" stroke-width="1.3" fill="none" />
<path d="M148.8 38.6l-2.1 2.4h4.2zM148.8 51l-2.1-2.4h4.2zM142.6 44.8l2.4-2.1v4.2zM155 44.8l-2.4-2.1v4.2z" stroke="none" stroke-width="0.9" fill="#f0f2f5" />
<path d="M146.5 56.4a2 2 0 1 0 0.01 0zM152 56.2a1.4 1.4 0 1 0 0.01 0zM147.6 60.6a2.6 2.6 0 1 0 0.01 0zM152.4 60.8a2.5 2.5 0 1 0 0.01 0z" stroke="#b5bfcc" stroke-width="0.8" fill="none" />
<path d="M143.8 72.4h7l3 10h-10zM149.2 73.6v7.2" stroke="#c3cad4" stroke-width="0.9" fill="none" />
<circle cx="149.2" cy="80.6" r="0.8" fill="#e8ecf2"/>
<path d="M199.6 41.2a4.7 4.7 0 1 1 -4 -1.0" stroke="#cdd3dc" stroke-width="0.9" fill="none" />
<path d="M194.4 38.6l2.4 1.5-2.2 1.7z" stroke="none" stroke-width="0.9" fill="#cdd3dc" />
<path d="M212.4 40h7.4" stroke="#f0f2f5" stroke-width="1.2" fill="none" />
<path d="M213.6 40.6l4.4 7.4M218.6 40.6l-4.2 7.4" stroke="#e8ecf2" stroke-width="1" fill="none" />
<circle cx="214.2" cy="48.6" r="1.3" fill="none" stroke="#9fb0c4" stroke-width="0.7"/><circle cx="218.2" cy="48.6" r="1.3" fill="none" stroke="#9fb0c4" stroke-width="0.7"/>
<path d="M226.50 43.65h3l-1.50 1.9z" fill="#dfe2e7"/>
<path d="M226.50 59.85h3l-1.50 1.9z" fill="#dfe2e7"/>
<path d="M226.50 76.25h3l-1.50 1.9z" fill="#dfe2e7"/>
<path d="M240.4 47.4l5.6-7.4 1.8 1.4-5.6 7.4z" stroke="none" stroke-width="0.9" fill="#f0d890" />
<path d="M238.4 49.8h8" stroke="#e07890" stroke-width="0.8" fill="none" />
<path d="M240.4 47.4l1.8 1.4-2.4.8z" stroke="none" stroke-width="0.9" fill="#f2f2f2" />
<path d="M196.4 56.4v9.4h-4.6zM197.6 56.4v9.4h4.6z" stroke="#c3cad4" stroke-width="0.8" fill="none" />
<path d="M211.4 66v-5.4c0-2.6 1.4-4 4-4" stroke="#8e9aaa" stroke-width="0.9" fill="none" />
<path d="M215.4 56.6h5" stroke="#6f7a8a" stroke-width="0.8" fill="none" stroke-dasharray="1.4 1"/>
<rect x="237.6" y="58.6" width="7.4" height="6.4" rx="1.2" fill="none" stroke="#8e9aaa" stroke-width="1"/><rect x="240.4" y="56.4" width="7.4" height="6.4" rx="1.2" fill="none" stroke="#8e9aaa" stroke-width="1"/>
<path d="M191.4 72.2h11v10.6h-11zM191.4 77h6v5.8" stroke="#aab4c2" stroke-width="0.8" fill="none" />
<g fill="none" stroke="#6f9cc8" stroke-width="0.9"><rect x="211.6" y="73" width="3.6" height="3.6"/><rect x="216.4" y="73" width="3.6" height="3.6"/><rect x="211.6" y="78" width="3.6" height="3.6"/><rect x="216.4" y="78" width="3.6" height="3.6"/></g>
<path d="M248 73.4h-6.4a3.9 3.9 0 0 0 0 7.8h6.4M248 75.6h-6a1.7 1.7 0 0 0 0 3.4h6" stroke="#9aa6b6" stroke-width="0.8" fill="none" />
<path d="M269.50 74.65h3l-1.50 1.9z" fill="#dfe2e7"/>
<path d="M295.2 38.4v21M316.2 38.4v21" stroke="#c3cad4" stroke-width="0.8" fill="none" />
<path d="M296 42.4h19.4" stroke="#d9dce1" stroke-width="0.8" fill="none" />
<path d="M295.6 42.4l2.4-1.3v2.6zM315.8 42.4l-2.4-1.3v2.6z" stroke="none" stroke-width="0.9" fill="#e8ecf2" />
<path d="M305.6 49v3.4M300.4 51l1.8 2.2M310.8 51l-1.8 2.2M298 55.4l3 .9M313.4 55.4l-3 .9" stroke="#e8c060" stroke-width="1.1" fill="none" />
<path d="M329 40.4v8M339.6 40.4v8M329 44h10.6" stroke="#8e9aaa" stroke-width="0.9" fill="none" />
<path d="M344.50 43.65h3l-1.50 1.9z" fill="#dfe2e7"/>
<path d="M330 63l6.2-5.4" stroke="#aab4c2" stroke-width="0.9" fill="none" />
<circle cx="337.4" cy="56.8" r="1.5" fill="none" stroke="#aab4c2" stroke-width="0.8"/>
<path d="M329.2 63.8l.5-2.6 2 2z" stroke="none" stroke-width="0.9" fill="#cfd6e0" />
<path d="M344.50 59.85h3l-1.50 1.9z" fill="#dfe2e7"/>
<g stroke="#aab4c2" stroke-width="0.7" fill="none"><rect x="329.4" y="72.6" width="9.4" height="8.6"/><path d="M329.4 75.4h9.4M329.4 78.2h9.4M332.6 75.4v5.8M335.8 75.4v5.8"/></g>
<path d="M369.0 38.8h15l-5 4.6h-15z" fill="#e9ecf0"/>
<path d="M367.6 44.4h15l-5 4.6h-15z" fill="#d5d9df"/>
<path d="M366.6 49.6h15l-5 4.6h-15z" fill="#e9ecf0"/>
<rect x="375.4" y="47" width="8.4" height="12" fill="#f4f6f8" stroke="#9ab" stroke-width="0.4"/><rect x="376.6" y="48.4" width="6" height="3.6" fill="#5aa8e6"/><path d="M376.6 54h6M376.6 56.4h6" stroke="#8aa" stroke-width="0.7"/>
<circle cx="400.2" cy="43.4" r="3" fill="#f5c842"/><rect x="398.8" y="46.2" width="2.8" height="2.6" fill="#e8e8e8"/>
<circle cx="412.6" cy="44.6" r="2.6" fill="#f5c030"/><path d="M412.6 40.4v8.4M408.4 44.6h8.4M409.6 41.6l6 6M415.6 41.6l-6 6" stroke="#f5c030" stroke-width="0.8"/>
<rect x="421.6" y="40.2" width="7.4" height="8" fill="#8a93a0" stroke="#b9c0ca" stroke-width="0.6"/><circle cx="429.2" cy="47.6" r="1.7" fill="#f5c842"/>
<rect x="434.6" y="44.4" width="6.8" height="5" fill="#f0a838"/><path d="M438.6 44.4v-1.6a2 2 0 0 1 4 0v1" fill="none" stroke="#f0a838" stroke-width="1"/>
<rect x="447.3" y="40.3" width="9.6" height="9.2" fill="#000" stroke="#d9d9d9" stroke-width="0.8"/>
<path d="M523.30 43.60h4l-2.00 2.4z" fill="#dfe2e7"/>
<path d="M398.4 56.4h8l-3 3h-8z" fill="#dfe3e8"/>
<circle cx="403.0" cy="62" r="2" fill="#58d0d8"/><rect x="402.2" y="64" width="1.6" height="1.6" fill="#e8e8e8"/>
<path d="M397.8 72.8h8l-2.4 2.2h-8z" fill="#dfe3e8"/>
<path d="M397.4 75.4h8l-2.4 2.2h-8z" fill="#c9cfd6"/>
<path d="M397.0 78.0h8l-2.4 2.2h-8z" fill="#dfe3e8"/>
<circle cx="403.40000000000003" cy="79" r="2" fill="#f5c842"/><rect x="402.6" y="81" width="1.6" height="1.4" fill="#e8e8e8"/>
<path d="M413.4 56.0h8l-2.4 2.2h-8z" fill="#dfe3e8"/>
<path d="M413.0 58.6h8l-2.4 2.2h-8z" fill="#c9cfd6"/>
<path d="M412.6 61.2h8l-2.4 2.2h-8z" fill="#dfe3e8"/>
<path d="M417.0 65.4l3.2-3.2" stroke="#e8ecf0" stroke-width="1" fill="none" />
<path d="M413.4 72.8h8l-2.4 2.2h-8z" fill="#dfe3e8"/>
<path d="M413.0 75.4h8l-2.4 2.2h-8z" fill="#c9cfd6"/>
<path d="M412.6 78.0h8l-2.4 2.2h-8z" fill="#dfe3e8"/>
<path d="M417.0 82l3.2-3.2" stroke="#e8ecf0" stroke-width="1" fill="none" />
<path d="M429.6 56.4h8l-3 3h-8z" fill="#dfe3e8"/>
<circle cx="434.6" cy="63" r="2" fill="#58b8c8"/>
<path d="M429.0 72.8h8l-2.4 2.2h-8z" fill="#dfe3e8"/>
<path d="M428.6 75.4h8l-2.4 2.2h-8z" fill="#c9cfd6"/>
<path d="M428.2 78.0h8l-2.4 2.2h-8z" fill="#dfe3e8"/>
<circle cx="434.2" cy="79.4" r="1.8" fill="#f5c030"/><path d="M434.2 76.4v6M431.2 79.4h6" stroke="#f5c030" stroke-width="0.7"/>
<path d="M445.2 56.4h8l-3 3h-8z" fill="#dfe3e8"/>
<rect x="448.0" y="62" width="4.4" height="3.6" fill="#58d0c8"/><path d="M449.0 62v-1.2a1.2 1.2 0 0 1 2.4 0v1.2" fill="none" stroke="#58d0c8" stroke-width="0.8"/>
<path d="M445.2 73.4h8l-3 3h-8z" fill="#dfe3e8"/>
<rect x="447.40000000000003" y="79" width="4.8" height="3.8" fill="none" stroke="#f0a838" stroke-width="1"/><path d="M450.40000000000003 79v-1.4a1.3 1.3 0 0 1 2.6 0v.6" fill="none" stroke="#f0a838" stroke-width="0.8"/>
<path d="M460.4 56.0h8l-2.4 2.2h-8z" fill="#dfe3e8"/>
<path d="M460.0 58.6h8l-2.4 2.2h-8z" fill="#c9cfd6"/>
<path d="M459.6 61.2h8l-2.4 2.2h-8z" fill="#dfe3e8"/>
<path d="M462.0 54.6h6l-2 2h-6z" fill="#9fd8e8"/>
<path d="M460.4 72.8h8l-2.4 2.2h-8z" fill="#dfe3e8"/>
<path d="M460.0 75.4h8l-2.4 2.2h-8z" fill="#c9cfd6"/>
<path d="M459.6 78.0h8l-2.4 2.2h-8z" fill="#dfe3e8"/>
<path d="M464.0 79.4h4.4v2l-2.2 2-2.2-2z" fill="#f5c842"/>
<path d="M544 37h8.6l3.4 3.2V53.4H544z" fill="#6ab8f0"/>
<rect x="534.8" y="44" width="15.4" height="10.6" fill="#8a929e"/><rect x="534.8" y="53.4" width="15.4" height="1.4" fill="#e8e8e8"/>
<circle cx="548.2" cy="53" r="4.2" fill="#7d8490" stroke="#b08878" stroke-width="1"/>
<path d="M544.00 74.45h3l-1.50 1.9z" fill="#dfe2e7"/>
<g fill="none" stroke="#aab4c2" stroke-width="0.8"><rect x="579.6" y="37.8" width="12.4" height="14.4"/><rect x="574.4" y="42.2" width="12.4" height="14"/></g>
<circle cx="586" cy="51" r="4.4" fill="#4a88c8" stroke="#cfd6e0" stroke-width="0.8"/><path d="M589.2 54.4l3 3.2" stroke="#cfd6e0" stroke-width="1.1"/><path d="M586 46.8v8.4M582 51h4" stroke="#2c4a70" stroke-width="0.7"/>
<path d="M605.50 72.15h2.6l-1.30 1.7z" fill="#dfe2e7"/>
<rect x="612.8" y="43" width="7.4" height="5.4" fill="#8a93a0"/><path d="M619.4 40.2l2.2 2.2-2.2 2.2-2.2-2.2z" fill="#f5c842"/>
<rect x="612.8" y="58.8" width="8" height="5.8" fill="#8a93a0"/><path d="M617 62.6l4.6-5 1.2 1.2-4.6 5z" fill="#e89050"/><circle cx="621" cy="63.6" r="1.6" fill="#aab4c2"/>
<path d="M613 74.4l3 5.6 3.6-5.6 2 .2-5.2 8.2-5-7z" fill="#e8ecf0"/><path d="M613 74h7l-3.6 5.4z" fill="#cfd6e0"/><path d="M618.6 77.8l4-4.6 1.2 1.2-4 4.6z" fill="#e89050"/>
<path d="M628.90 76.25h3l-1.50 1.9z" fill="#dfe2e7"/>
<rect x="647.6" y="38.4" width="13" height="17.6" fill="#e8ecf0"/><rect x="649.2" y="40" width="9.8" height="7.2" fill="#8ccaf0"/><path d="M649.2 49.6h9.8M649.2 52.4h9.8" stroke="#889" stroke-width="0.8"/><circle cx="650.6" cy="49.6" r="0.8" fill="#e05050"/>
<path d="M658.6 52.4l3.4-2.4 4 5.6-3.4 2.4z" fill="#f0d888"/><path d="M662 50l3.6-3 1.8 2.4-3.6 2.6z" fill="#f4f4f4"/>
<g transform="translate(683.4,44.6)"><circle r="5.2" fill="#e8e8e8"/>
<path d="M0 0L0 -5A5 5 0 0 1 4.33 -2.5z" fill="#f0c030"/><path d="M0 0L4.33 -2.5A5 5 0 0 1 4.33 2.5z" fill="#50b850"/><path d="M0 0L4.33 2.5A5 5 0 0 1 0 5z" fill="#3890e0"/>
<path d="M0 0L0 5A5 5 0 0 1 -4.33 2.5z" fill="#8050d0"/><path d="M0 0L-4.33 2.5A5 5 0 0 1 -4.33 -2.5z" fill="#e04080"/><path d="M0 0L-4.33 -2.5A5 5 0 0 1 0 -5z" fill="#f07030"/></g>
<rect x="678" y="55.2" width="11" height="1.2" fill="#e8ecf0"/><rect x="678" y="58.4" width="11" height="2" fill="#e8ecf0"/><rect x="678" y="62.6" width="11" height="3" fill="#e8ecf0"/>
<path d="M678 74h11M678 77h11M678 80h11" stroke="#9aa4b2" stroke-width="0.8" stroke-dasharray="2 1"/>
<rect x="695.3" y="40.2" width="9.8" height="9.4" fill="#000" stroke="#d9d9d9" stroke-width="0.8"/>
<path d="M695 61.2h42M695 77.6h42" stroke="#e0e4ea" stroke-width="0.7"/>
<path d="M773.00 43.70h3.6l-1.80 2.2z" fill="#dfe2e7"/>
<path d="M773.00 60.10h3.6l-1.80 2.2z" fill="#dfe2e7"/>
<path d="M773.00 76.50h3.6l-1.80 2.2z" fill="#dfe2e7"/>
<path d="M788.4 42.2h-2v17h2M797.4 42.2h2v17h-2" stroke="#c3cad4" stroke-width="0.9" fill="none" />
<rect x="789.6" y="44.4" width="6.4" height="4.8" fill="#4a80c0" stroke="#9ab" stroke-width="0.5"/><circle cx="792.8" cy="54.6" r="2.8" fill="#7d8794" stroke="#aab4c2" stroke-width="0.6"/>
<g stroke="#f5c842" stroke-width="1.2"><path d="M801.2 38.6v9.6M796.4 43.4h9.6M797.8 40l6.8 6.8M804.6 40l-6.8 6.8"/></g><circle cx="801.2" cy="43.4" r="2.4" fill="#f5d060"/>
<rect x="812.2" y="40.4" width="4.6" height="3.6" fill="#5a88c0"/><circle cx="814.4" cy="47" r="2" fill="#8a93a0"/><path d="M818.4 39.4h2v9.6h-2" fill="none" stroke="#c3cad4" stroke-width="0.7"/><path d="M820.4 41l1.4 2.6-1.4 3.4-1.2-3.4z" fill="#e05070"/>
<path d="M813.6 55.6h-1.6v8.6h1.6M816 55.6h1.6v8.6h-1.6" stroke="#c3cad4" stroke-width="0.7" fill="none" />
<circle cx="814.8" cy="58" r="1" fill="none" stroke="#aab4c2" stroke-width="0.6"/><circle cx="814.8" cy="61.6" r="1" fill="none" stroke="#aab4c2" stroke-width="0.6"/><path d="M817 64.8l4.6-4.2 1 1-4.6 4.2z" fill="#f0d888"/>
<path d="M814 72.6h-1.6v8.8h1.6M817 72.6h1.6v8.8h-1.6" stroke="#c3cad4" stroke-width="0.7" fill="none" />
<rect x="814" y="74" width="3" height="5.6" fill="#7d8794"/><path d="M817.6 77l3.4 3.6-1.4.2.8 1.8-.9.4-.8-1.8-1.1.9z" fill="#f4f6f8"/>
<rect x="840.4" y="46.6" width="19.2" height="4.6" rx="0.6" fill="#f2c84a"/><path d="M842.6 47.6v2M844.8 47.6v1.4M847 47.6v2M849.2 47.6v1.4M851.4 47.6v2M853.6 47.6v1.4M855.8 47.6v2M857.8 47.6v1.4" stroke="#a8842a" stroke-width="0.6"/>
<path d="M848.50 74.45h3l-1.50 1.9z" fill="#dfe2e7"/>
<rect x="879" y="43.4" width="6.6" height="6" fill="#b8d8f0" stroke="#e8ecf0" stroke-width="0.8"/><path d="M874.8 42.2l3.2 5.4.6-2 2-.4z" fill="#f4f6f8"/><path d="M877.6 38.8l1.6 2-1.6 2-1.6-2z" fill="#f5c842"/>
<rect x="875.4" y="56.4" width="8" height="8" fill="#3a9a5a"/><rect x="877.6" y="58" width="5" height="5" fill="#8fd0a0"/><path d="M881.4 61l3.6 3.8-1.5.2.8 1.9-1 .4-.8-1.9-1.1 1z" fill="#f4f6f8"/>
<rect x="876.6" y="72.4" width="7" height="10" fill="#e8ecf0"/><rect x="877.6" y="73.4" width="5" height="2" fill="#8a93a0"/><path d="M877.6 77.2h5M877.6 79h5M877.6 80.8h5" stroke="#8a93a0" stroke-width="0.7" stroke-dasharray="1.2 0.7"/>
<rect x="899.6" y="41" width="14" height="16.4" rx="0.8" fill="#d9a868"/><rect x="904" y="39.6" width="5.4" height="2.6" rx="1" fill="#f0f0f0"/><path d="M904.6 45.6h8l3.6 3.4V60H904.6z" fill="#dcdcdc"/><path d="M912.6 45.6v3.4h3.6z" fill="#f8f8f8"/>
<path d="M906.30 74.65h3l-1.50 1.9z" fill="#dfe2e7"/>
<rect x="927" y="39.8" width="7.4" height="8.4" fill="#cfd4da"/><path d="M928.2 41.6h5M928.2 43.4h5M928.2 45.2h3" stroke="#59606b" stroke-width="0.7"/><path d="M931.6 45.2l5 4.6M936.6 45.2l-5 4.6" stroke="#dfe3e8" stroke-width="1.1"/>
<path d="M941.30 43.65h3l-1.50 1.9z" fill="#dfe2e7"/>
<rect x="928" y="55.6" width="5.8" height="7.6" fill="#aab0b8"/><path d="M930.4 57.8h4.2l2 1.8v6.6h-6.2z" fill="#dfe3e8"/>
<path d="M941.30 60.05h3l-1.50 1.9z" fill="#dfe2e7"/>
<path d="M960 41.2h9v6.4h12V57h-21z" fill="#dfe1e4"/>
<path d="M969.10 74.25h3l-1.50 1.9z" fill="#dfe2e7"/>
<path d="M4.2 105.6h10.4M4.2 109.2h10.4M4.2 112.8h10.4" stroke="#e8e8e8" stroke-width="1.3"/>
<path d="M57.6 99H123.4L117.6 118H51.8z" fill="#3b4453"/>
<path d="M24.6 103l-3.2 12M149 103l-3.2 12" stroke="#4a5262" stroke-width="0.8"/>
<path d="M108.6 106l5.4 5.4M114 106l-5.4 5.4" stroke="#c8ccd2" stroke-width="0.9"/>
<path d="M133.4 103.6v10.4M128.2 108.8h10.4" stroke="#f0f0f0" stroke-width="1.3"/>
<rect x="963.4" y="129.6" width="6.6" height="1.6" fill="#f4f4f4" stroke="#555" stroke-width="0.4"/>
<rect x="976.4" y="126.4" width="5.2" height="5" fill="none" stroke="#f4f4f4" stroke-width="1.1"/><path d="M978 126v-1.6h5.2v5" fill="none" stroke="#f4f4f4" stroke-width="0.9"/>
<path d="M989.6 125.8l5 5.4M994.6 125.8l-5 5.4" stroke="#f4f4f4" stroke-width="1.2"/>
<g fill="#c8ccd2"><rect x="0.8" y="512.6" width="1.6" height="1"/><rect x="3.4" y="512.6" width="1.6" height="1"/><rect x="6" y="512.6" width="1.6" height="1"/><rect x="0.8" y="514.8" width="1.6" height="1"/><rect x="3.4" y="514.8" width="1.6" height="1"/><rect x="6" y="514.8" width="1.6" height="1"/></g>
<path d="M1.2 523l4.6 4.6M5.8 523l-4.6 4.6" stroke="#e0e0e0" stroke-width="1.1"/>
<path d="M1 541l3.4-3.4a2 2 0 1 1 1.4 1.4L2.4 542.4z" fill="#e0e0e0"/>
<rect x="12.6" y="533.6" width="9" height="8.2" fill="#f4f4f4" stroke="#9a9a9a" stroke-width="0.7"/><rect x="12.6" y="533.6" width="9" height="2" fill="#b8b8b8"/><path d="M14 539.6h3" stroke="#888" stroke-width="0.6"/>
<path d="M24.80 536.80h3.2l-1.60 2z" fill="#666"/>
<path d="M4.2 552.2h10.4M4.2 555.8h10.4M4.2 559.4h10.4" stroke="#e8e8e8" stroke-width="1.3"/>
<path d="M64.6 546.6H125.6L120.4 563.4H59.4z" fill="#3b4453"/>
<path d="M26 549.6l-3.2 12M149.4 549.6l-3.2 12" stroke="#4a5262" stroke-width="0.8"/>
<path d="M136.6 550.6v10.4M131.4 555.8h10.4" stroke="#f0f0f0" stroke-width="1.3"/>
<path d="M543.2 552.6h8.8M543.2 555.8h8.8M543.2 559h8.8M544.6 551.4v9M547.6 551.4v9M550.6 551.4v9" stroke="#e8ecf0" stroke-width="0.8" fill="none" />
<rect x="560.4" y="552.8" width="1.1" height="1.1" fill="#e8ecf0"/>
<rect x="560.4" y="555.4" width="1.1" height="1.1" fill="#e8ecf0"/>
<rect x="560.4" y="558.0" width="1.1" height="1.1" fill="#e8ecf0"/>
<rect x="563.0" y="552.8" width="1.1" height="1.1" fill="#e8ecf0"/>
<rect x="563.0" y="555.4" width="1.1" height="1.1" fill="#e8ecf0"/>
<rect x="563.0" y="558.0" width="1.1" height="1.1" fill="#e8ecf0"/>
<rect x="565.6" y="552.8" width="1.1" height="1.1" fill="#e8ecf0"/>
<rect x="565.6" y="555.4" width="1.1" height="1.1" fill="#e8ecf0"/>
<rect x="565.6" y="558.0" width="1.1" height="1.1" fill="#e8ecf0"/>
<path d="M574.50 555.30h3.6l-1.80 2.2z" fill="#dfe2e7"/>
<rect x="582.4" y="549" width="0.8" height="14" fill="#3c4452"/>
<path d="M588.2 551.4v5M585.8 553.8h5" stroke="#e8ecf0" stroke-width="0.8" fill="none" />
<rect x="590" y="557" width="5" height="2.6" fill="#e8ecf0"/>
<rect x="600.2" y="548.4" width="15.0" height="15.2" fill="#5b93d0"/>
<path d="M603.6 551.4v9h8.6" stroke="#f4f8ff" stroke-width="0.9" fill="none" />
<path d="M603.6 562h8.6" stroke="#d0e0f8" stroke-width="0.6" fill="none" />
<circle cx="622.2" cy="556.4" r="3.8" fill="none" stroke="#cfd6e0" stroke-width="0.8"/>
<path d="M622.2 556.4h5.4M622.2 556.4l3.4-3.6" stroke="#cfd6e0" stroke-width="0.7" fill="none" />
<path d="M634.80 555.30h3.6l-1.80 2.2z" fill="#dfe2e7"/>
<path d="M650.4 550.6v11M650.4 556l-3.6-2.4M650.4 556l3.6-2.4" stroke="#6d7684" stroke-width="0.8" fill="none" />
<path d="M661.20 555.30h3.6l-1.80 2.2z" fill="#dfe2e7"/>
<rect x="669.2" y="548.4" width="15.099999999999909" height="15.2" fill="#5b93d0"/>
<path d="M672 561l9.6-8.6M672 561h9.6" stroke="#f4f8ff" stroke-width="0.9" fill="none" />
<rect x="684.9" y="548.4" width="14.899999999999977" height="15.2" fill="#5b93d0"/>
<rect x="688.2" y="552" width="8.4" height="8.4" fill="none" stroke="#f4f8ff" stroke-width="0.9"/><rect x="687.2" y="551" width="2.2" height="2.2" fill="#f4f8ff"/>
<path d="M703.80 555.30h3.6l-1.80 2.2z" fill="#dfe2e7"/>
<rect x="711.4" y="548.4" width="15.0" height="15.2" fill="#5b93d0"/>
<path d="M714.4 552.4h9.4" stroke="#fff" stroke-width="1" fill="none" />
<path d="M714.4 555.6h9.4" stroke="#fff" stroke-width="1.6" fill="none" />
<path d="M714.4 559.4h9.4" stroke="#fff" stroke-width="2.2" fill="none" />
<rect x="733" y="552" width="8.4" height="8.4" fill="none" stroke="#cfd6e0" stroke-width="0.8" stroke-dasharray="1.6 1"/><rect x="735" y="554" width="4.4" height="4.4" fill="none" stroke="#cfd6e0" stroke-width="0.7"/>
<path d="M751.6 551v5.4M751.6 556.4l-3.6 4.6M751.6 556.4l3.6 4.6" stroke="#e8ecf0" stroke-width="1.5" fill="none" />
<path d="M754.6 551.6l2 2" stroke="#e8ecf0" stroke-width="0.7" fill="none" />
<rect x="761" y="548.4" width="15.100000000000023" height="15.2" fill="#5b93d0"/>
<path d="M768 551v5.4M768 556.4l-3.6 4.6M768 556.4l3.6 4.6" stroke="#ffffff" stroke-width="1.5" fill="none" />
<path d="M771.2 551.6l2 2" stroke="#fff" stroke-width="0.7" fill="none" />
<rect x="780.4" y="555.6" width="6.8" height="5.6" fill="none" stroke="#aab4c2" stroke-width="0.9"/><path d="M781.8 555.6v-2a2 2 0 0 1 4 0v2" fill="none" stroke="#aab4c2" stroke-width="0.9"/>
<rect x="795.4" y="555" width="5" height="5.4" fill="none" stroke="#9aa4b2" stroke-width="0.8"/><path d="M801.6 552h2.4v2.4M803.8 558v2.4h-2" fill="none" stroke="#9aa4b2" stroke-width="0.7"/>
<path d="M848.40 555.30h3.6l-1.80 2.2z" fill="#dfe2e7"/>
<rect x="856.4" y="548.4" width="15.100000000000023" height="15.2" fill="#5b93d0"/>
<rect x="859.6" y="551.4" width="8.8" height="8" fill="none" stroke="#fff" stroke-width="0.9"/>
<path d="M864 554v3.4M864 557.4l-2.6 3.6M864 557.4l2.6 3.6" stroke="#fff" stroke-width="1.1" fill="none" />
<g transform="translate(881,556.2)"><circle r="3.2" fill="none" stroke="#e8ecf0" stroke-width="1.8"/><g stroke="#e8ecf0" stroke-width="1.6"><path d="M0 -5.4v2M0 5.4v-2M-5.4 0h2M5.4 0h-2M-3.8 -3.8l1.4 1.4M3.8 3.8l-1.4 -1.4M-3.8 3.8l1.4 -1.4M3.8 -3.8l-1.4 1.4"/></g></g>
<path d="M892.80 555.30h3.6l-1.80 2.2z" fill="#dfe2e7"/>
<path d="M907.9 551v10.4M902.7 556.2h10.4" stroke="#f0f2f5" stroke-width="1.1" fill="none" />
<rect x="921.4" y="550.8" width="3.6" height="3.6" fill="none" stroke="#cfd6e0" stroke-width="0.7"/><circle cx="928.8" cy="556" r="1.9" fill="none" stroke="#cfd6e0" stroke-width="0.7"/><path d="M923.4 557.4l2.4 4h-4.8z" fill="none" stroke="#cfd6e0" stroke-width="0.7"/>
<rect x="937.6" y="550.6" width="7.4" height="10.4" fill="#e8d8b0"/><rect x="939.4" y="552.6" width="3.8" height="5" fill="#e08838"/>
<path d="M952.4 556.6h7.4v4.6h-7.4z" fill="#4a88d0"/><path d="M953 551.2l3.4 2.6-3.4 2.4z" fill="#f0d040"/><path d="M957 553.4l3 1.4-1 2.2" fill="none" stroke="#f0d040" stroke-width="0.9"/>
<rect x="965.4" y="549" width="0.8" height="14" fill="#3c4452"/>
<rect x="971.6" y="552.4" width="9.6" height="7.4" fill="none" stroke="#e8ecf0" stroke-width="1"/><path d="M973.4 556v-1.8h2M979.4 556.2v1.8h-2" fill="none" stroke="#e8ecf0" stroke-width="0.8"/>
<path d="M988 552.6h8M988 556.2h8M988 559.8h8" stroke="#e8ecf0" stroke-width="1.2" fill="none" />
</g>
</svg>
<div id="txt" style="left:0;top:0;width:996px;height:567px;will-change:transform;">
<span style="left:1.2px;top:2.90px;font-size:9.6px;line-height:11.6px;color:#fff;font-weight:bold;">A</span>
<span style="left:207px;top:5.30px;font-size:7.6px;line-height:9.6px;color:#6fb2e0;">Share</span>
<span style="left:324px;top:5.20px;font-size:7.8px;line-height:9.8px;color:#eceef0;">Autodesk AutoCAD 2026&nbsp;&nbsp;&nbsp;&nbsp;44-Vports.dwg</span>
<span style="left:573.6px;top:5.35px;font-size:7.1px;line-height:9.1px;color:#b9bec8;font-style:italic;">Type a keyword or phrase</span>
<span style="left:722px;top:5.00px;font-size:8px;line-height:10px;color:#e4e6ea;">Remaga</span>
<span style="left:1.6px;top:23.10px;font-size:8px;line-height:10px;color:#ffffff;">Home</span>
<span style="left:36px;top:23.10px;font-size:8px;line-height:10px;color:#d4d8de;">Insert</span>
<span style="left:67.7px;top:23.10px;font-size:8px;line-height:10px;color:#d4d8de;">Annotate</span>
<span style="left:112.7px;top:23.10px;font-size:8px;line-height:10px;color:#d4d8de;">Parametric</span>
<span style="left:162.3px;top:23.10px;font-size:8px;line-height:10px;color:#d4d8de;">View</span>
<span style="left:191.7px;top:23.10px;font-size:8px;line-height:10px;color:#d4d8de;">Manage</span>
<span style="left:232.3px;top:23.10px;font-size:8px;line-height:10px;color:#d4d8de;">Output</span>
<span style="left:269.3px;top:23.10px;font-size:8px;line-height:10px;color:#d4d8de;">Add-ins</span>
<span style="left:309.3px;top:23.10px;font-size:8px;line-height:10px;color:#d4d8de;">Collaborate</span>
<span style="left:363px;top:23.10px;font-size:8px;line-height:10px;color:#d4d8de;">Express Tools</span>
<span style="left:421.3px;top:23.10px;font-size:8px;line-height:10px;color:#d4d8de;">Featured Apps</span>
<span style="left:485.3px;top:23.10px;font-size:8px;line-height:10px;color:#ffffff;">Layout</span>
<span style="left:-37.5px;width:200px;text-align:center;top:89.00px;font-size:8px;line-height:10px;color:#e6e8ec;">Draw</span>
<span style="left:92.9px;width:200px;text-align:center;top:89.00px;font-size:8px;line-height:10px;color:#e6e8ec;">Modify</span>
<span style="left:199px;width:200px;text-align:center;top:89.00px;font-size:8px;line-height:10px;color:#e6e8ec;">Annotation</span>
<span style="left:337.2px;width:200px;text-align:center;top:89.00px;font-size:8px;line-height:10px;color:#e6e8ec;">Layers</span>
<span style="left:479.20000000000005px;width:200px;text-align:center;top:89.00px;font-size:8px;line-height:10px;color:#e6e8ec;">Block</span>
<span style="left:600.8px;width:200px;text-align:center;top:89.00px;font-size:8px;line-height:10px;color:#e6e8ec;">Properties</span>
<span style="left:699.7px;width:200px;text-align:center;top:89.00px;font-size:8px;line-height:10px;color:#e6e8ec;">Groups</span>
<span style="left:753.7px;width:200px;text-align:center;top:89.00px;font-size:8px;line-height:10px;color:#e6e8ec;">Utilities</span>
<span style="left:819.9px;width:200px;text-align:center;top:89.00px;font-size:8px;line-height:10px;color:#e6e8ec;">Clipboard</span>
<span style="left:861.5px;width:200px;text-align:center;top:89.00px;font-size:8px;line-height:10px;color:#e6e8ec;">View</span>
<span style="left:-92px;width:200px;text-align:center;top:63.00px;font-size:8px;line-height:10px;color:#eef0f3;">Line</span>
<span style="left:-64px;width:200px;text-align:center;top:63.00px;font-size:8px;line-height:10px;color:#eef0f3;">Polyline</span>
<span style="left:-32px;width:200px;text-align:center;top:63.20px;font-size:8px;line-height:10px;color:#eef0f3;">Circle</span>
<span style="left:-2px;width:200px;text-align:center;top:63.00px;font-size:8px;line-height:10px;color:#eef0f3;">Arc</span>
<span style="left:157.6px;top:40.30px;font-size:8px;line-height:10px;color:#eef0f3;">Move</span>
<span style="left:157.6px;top:56.50px;font-size:8px;line-height:10px;color:#eef0f3;">Copy</span>
<span style="left:157.6px;top:72.80px;font-size:8px;line-height:10px;color:#eef0f3;">Stretch</span>
<span style="left:262.5px;top:35.75px;font-size:25.5px;line-height:27.5px;color:#f0f0f0;">A</span>
<span style="left:171px;width:200px;text-align:center;top:63.00px;font-size:8px;line-height:10px;color:#eef0f3;">Text</span>
<span style="left:205.5px;width:200px;text-align:center;top:63.00px;font-size:8px;line-height:10px;color:#eef0f3;">Dimension</span>
<span style="left:272.5px;width:200px;text-align:center;top:62.80px;font-size:8px;line-height:10px;color:#eef0f3;">Layer</span>
<span style="left:272.5px;width:200px;text-align:center;top:73.50px;font-size:8px;line-height:10px;color:#eef0f3;">Properties</span>
<span style="left:460px;top:40.30px;font-size:8px;line-height:10px;color:#eef0f3;">Vports</span>
<span style="left:445.5px;width:200px;text-align:center;top:62.00px;font-size:8px;line-height:10px;color:#eef0f3;">Insert</span>
<span style="left:484.5px;width:200px;text-align:center;top:63.00px;font-size:8px;line-height:10px;color:#eef0f3;">Detect and</span>
<span style="left:484.5px;width:200px;text-align:center;top:73.50px;font-size:8px;line-height:10px;color:#eef0f3;">Convert</span>
<span style="left:557px;width:200px;text-align:center;top:62.80px;font-size:8px;line-height:10px;color:#eef0f3;">Match</span>
<span style="left:557px;width:200px;text-align:center;top:73.50px;font-size:8px;line-height:10px;color:#eef0f3;">Properties</span>
<span style="left:708px;top:40.30px;font-size:8px;line-height:10px;color:#eef0f3;">ByLayer</span>
<span style="left:738px;top:56.70px;font-size:8px;line-height:10px;color:#eef0f3;">ByLayer</span>
<span style="left:738px;top:73.00px;font-size:8px;line-height:10px;color:#eef0f3;">ByLayer</span>
<span style="left:695.5px;width:200px;text-align:center;top:62.80px;font-size:8px;line-height:10px;color:#eef0f3;">Group</span>
<span style="left:750px;width:200px;text-align:center;top:63.20px;font-size:8px;line-height:10px;color:#eef0f3;">Measure</span>
<span style="left:807.5px;width:200px;text-align:center;top:63.30px;font-size:8px;line-height:10px;color:#eef0f3;">Paste</span>
<span style="left:870px;width:200px;text-align:center;top:63.10px;font-size:8px;line-height:10px;color:#eef0f3;">Base</span>
<span style="left:31px;top:104.70px;font-size:8px;line-height:10px;color:#d4d8de;">Start</span>
<span style="left:63.8px;top:104.70px;font-size:8px;line-height:10px;color:#ffffff;font-weight:bold;">44-Vports*</span>
<span class="mono" style="left:11px;top:510.75px;font-size:7.9px;line-height:9.9px;color:#111;">Command: Specify opposite corner or [Fence/WPolygon/CPolygon]: *Cancel*</span>
<span class="mono" style="left:11px;top:520.75px;font-size:7.9px;line-height:9.9px;color:#111;">Command: _.MSPACE</span>
<span class="mono" style="left:33.7px;top:533.40px;font-size:7.8px;line-height:9.8px;color:#8a8a8a;font-style:italic;">Type a command</span>
<span style="left:31.7px;top:551.30px;font-size:8px;line-height:10px;color:#d4d8de;">Model</span>
<span style="left:70.3px;top:551.30px;font-size:8px;line-height:10px;color:#ffffff;font-weight:bold;">Formato A0</span>
<span style="left:509.8px;top:552.05px;font-size:7.3px;line-height:9.3px;color:#f0f0f0;">MODEL</span>
<span style="left:810.8px;top:552.10px;font-size:7.2px;line-height:9.2px;color:#e8e8e8;">12.303933</span>
<span style="left:836.7px;top:4.2px;font-size:8.5px;line-height:10px;color:#1f252f;font-weight:bold;">?</span>
</div>
</div>
</body></html>
